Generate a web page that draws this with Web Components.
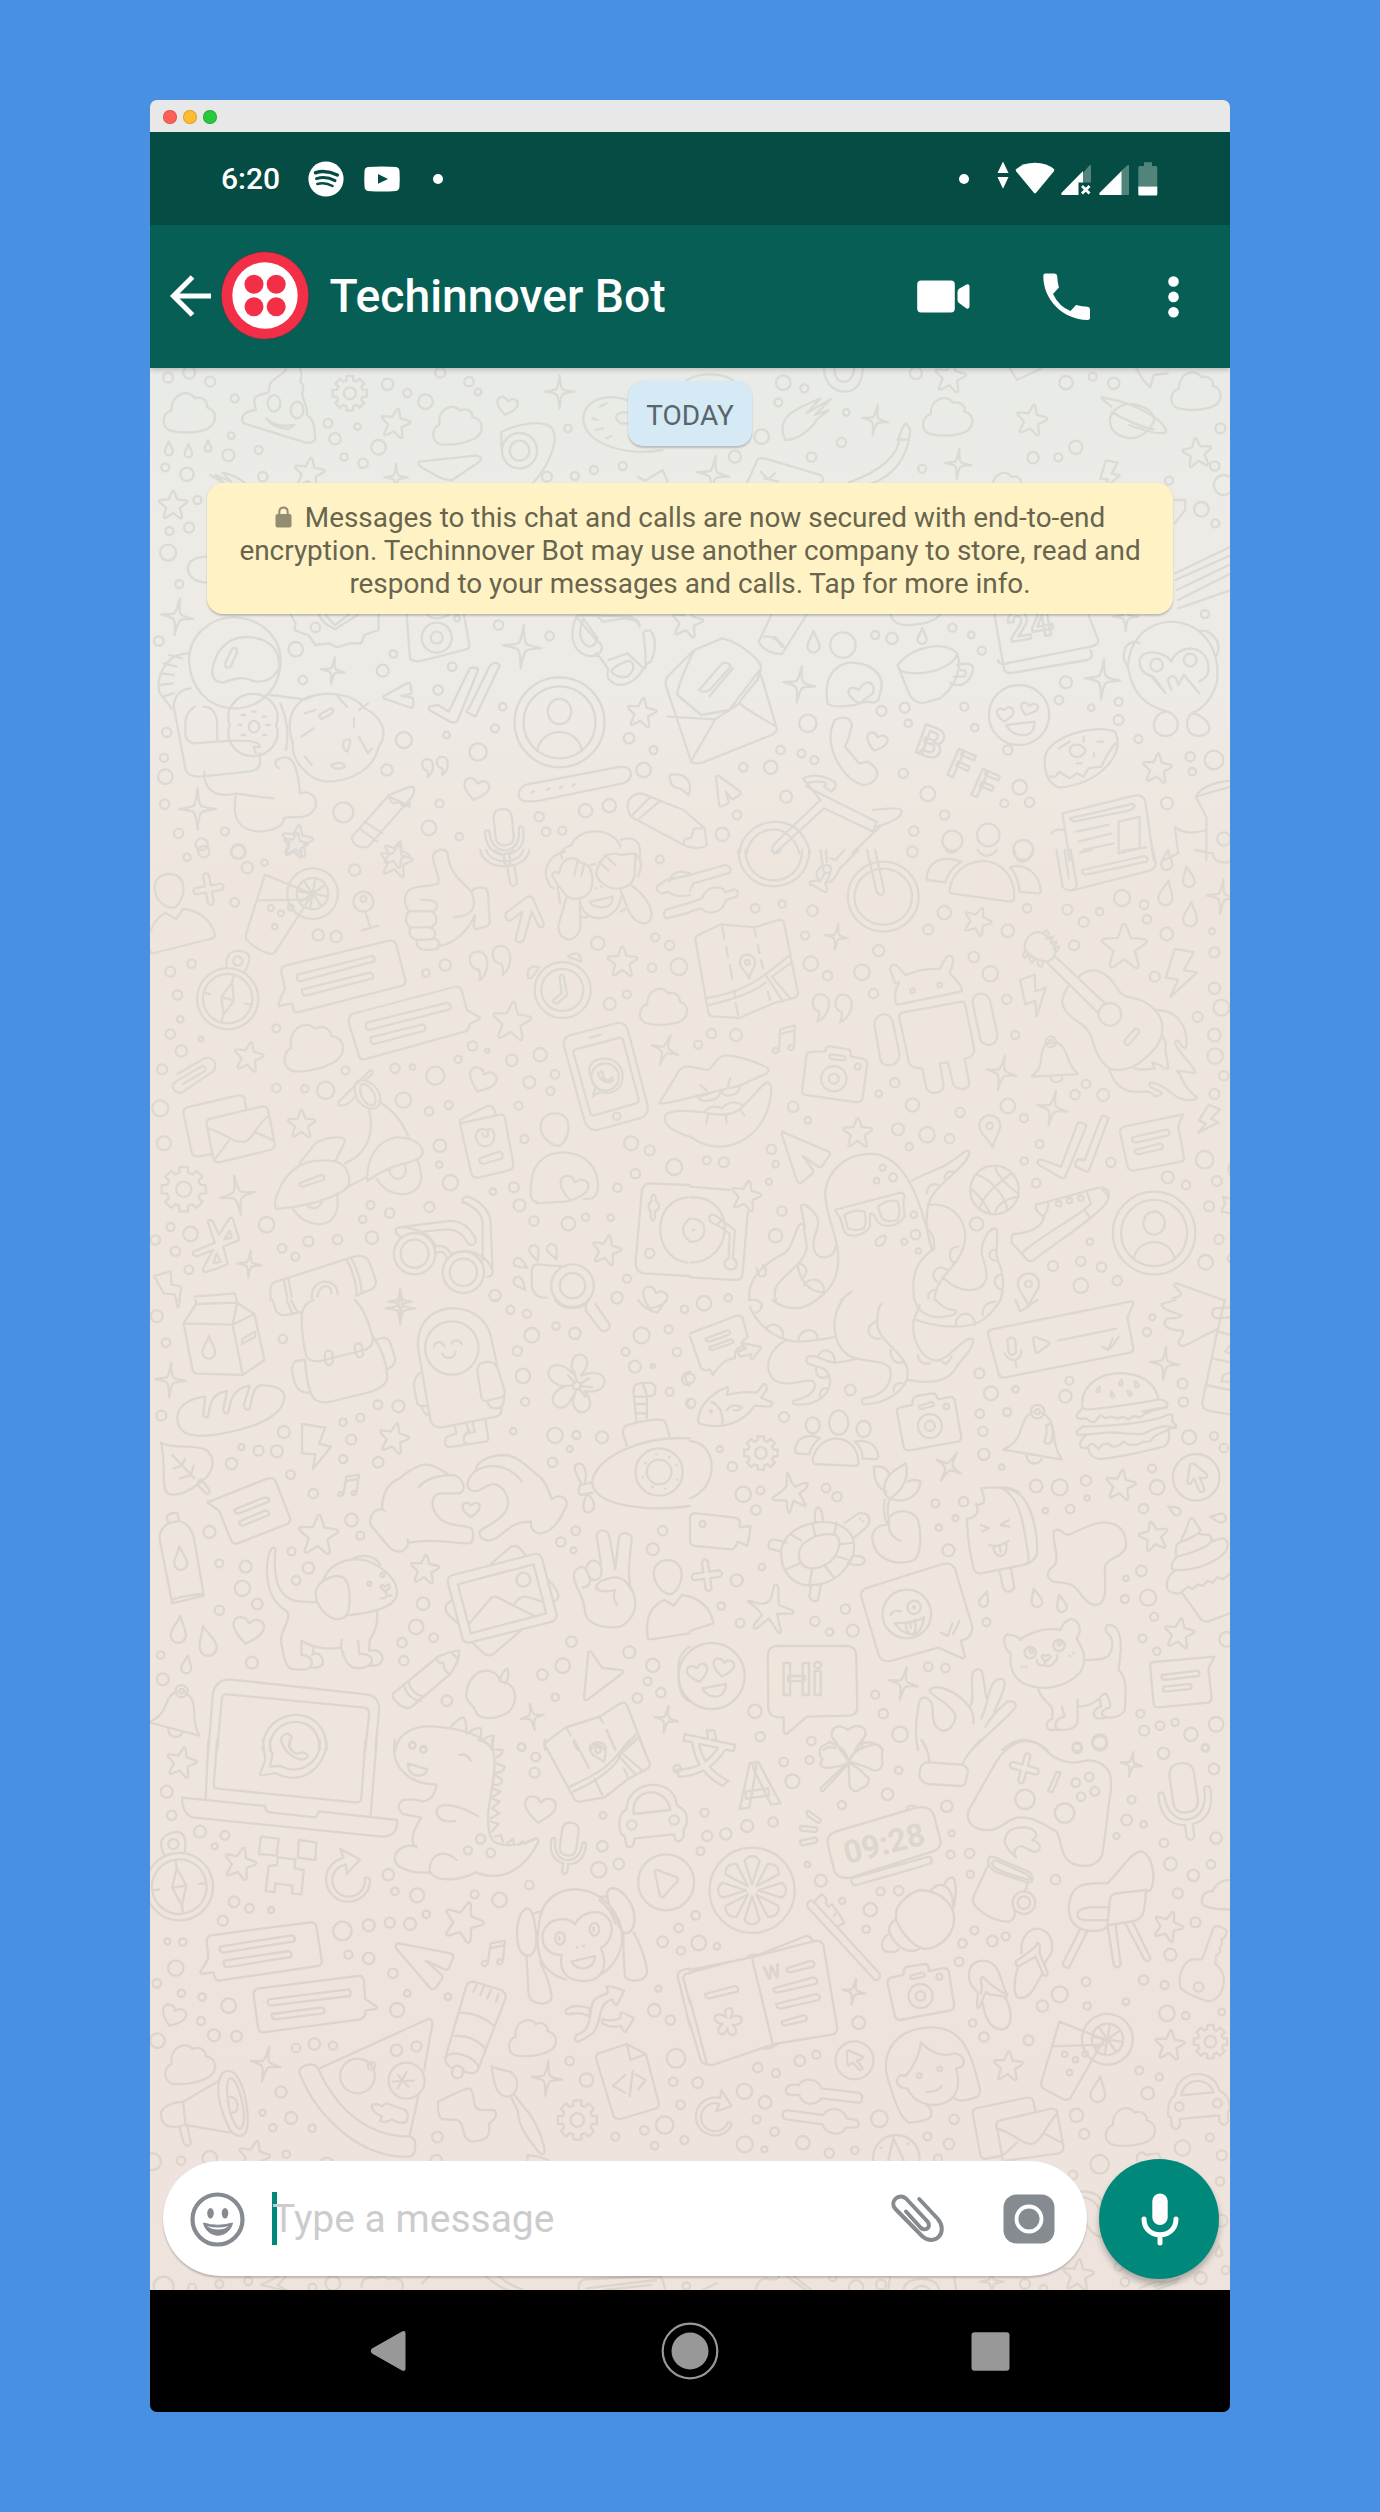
<!DOCTYPE html>
<html lang="en">
<head>
<meta charset="utf-8">
<title>Techinnover Bot</title>
<style>
html,body{margin:0;padding:0}
body{background:#4a90e2;font-family:Roboto,"Liberation Sans",sans-serif;height:2512px;display:flex;justify-content:center;align-items:flex-start}
</style>
</head>
<body>
<phone-window></phone-window>
<script>
const define=(name,html,after)=>customElements.define(name,class extends HTMLElement{
  connectedCallback(){
    if(this.shadowRoot)return;
    const r=this.attachShadow({mode:'open'});
    r.innerHTML=typeof html==='function'?html(this):html;
    if(after)after(r,this);
  }
});

/* ---------- icons ---------- */
const ICONS={
spotify:[36,36,'<circle cx="18" cy="18" r="17.6" fill="#fff"/><g fill="none" stroke="#054d44" stroke-linecap="round"><path d="M7.5 11.7Q18 8.700 29.300 14" stroke-width="3.500"/><path d="M8.500 17.600Q18 14.800 27 19.600" stroke-width="3"/><path d="M9.300 23Q17 20.800 24.600 25" stroke-width="2.500"/></g>'],
youtube:[36,26,'<path d="M4 .9Q18-.1 32 .9Q35.300 1.300 35.500 5Q36 13 35.500 20.500Q35.300 24.300 32 24.900Q18 25.900 4 24.900Q.7 24.300.5 20.500Q0 13 .5 5Q.7 1.300 4 .9Z" fill="#fff"/><path d="M14 8L24 12.900L14 17.800Z" fill="#054d44"/>'],
dot:[10,10,'<circle cx="5" cy="5" r="5" fill="#fff"/>'],
updown:[12,28,'<path d="M.5 12L6 .5L11.500 12ZM.5 16H11.500L6 27.700Z" fill="#fff"/>'],
wifi:[40,32,'<path d="M.6 7.600Q8 .8 20 .8Q32 .8 39.400 7.600L38.900 9.300L20.900 31Q20 31.900 19.100 31L1.100 9.300Z" fill="#fff"/>'],
signalx:[31,31,'<path d="M22 9L28.500 1.300Q30 .3 30 2V18.500H22Z" fill="#51857c"/><path d="M22 7V18.500H17.500V31H.8Q0 30 .4 29Z" fill="#fff"/><path d="M21 22L28.500 29.500M28.500 22L21 29.500" stroke="#fff" stroke-width="2.800"/>'],
signal:[31,31,'<path d="M22 7L28.500 1.300Q30 .3 30 2V30Q30 31 29 31H22Z" fill="#51857c"/><path d="M22.500 7V31H.8Q0 30 .4 29Z" fill="#fff"/>'],
battery:[20,34,'<path d="M6 .3H14V4H18Q19.300 4 19.300 5.500V24.500H.3V5.500Q.3 4 1.500 4H6Z" fill="#51857c"/><path d="M.3 24.500H19.300V32Q19.300 33.500 18 33.500H1.500Q.3 33.500.3 32Z" fill="#fff"/>'],
back:[42,42,'<path d="M22.500 2L3.500 21L22.500 40M4 21H41" stroke="#fff" stroke-width="5" fill="none"/>'],
twilio:[88,89,'<circle cx="44" cy="44.500" r="43.800" fill="#f22f46" stroke="#3d3f49" stroke-width=".7"/><ellipse cx="44" cy="44.500" rx="32.700" ry="33.300" fill="#fff"/><g fill="#f22f46"><circle cx="33" cy="33.300" r="9.500"/><circle cx="55.200" cy="33.300" r="9.500"/><circle cx="33" cy="55.700" r="9.500"/><circle cx="55.200" cy="55.700" r="9.500"/></g>'],
video:[53,33,'<rect x=".2" y=".4" width="37.600" height="32.200" rx="4" fill="#fff"/><path d="M40.500 12Q40.500 10 42 8.700L49.500 4.500Q52.500 3.800 52.500 6.500V26.500Q52.500 29.200 49.500 28.500L42 23Q40.500 22 40.500 20Z" fill="#fff"/>'],
phone:[48,48,'<path d="M2 .5H11.500Q14 .6 14.200 3Q14.400 9 15.900 14.500L10 21Q16 33.500 27.500 38L33 32Q39 33.700 44.500 33.800Q47 34 47 36.500V44.500Q47 47 44.500 47C20 46.500.3 27 .3 3Q.2 .7 2 .5Z" fill="#fff"/>'],
more:[11,42,'<g fill="#fff"><circle cx="5.500" cy="5.500" r="5.300"/><circle cx="5.500" cy="20.900" r="5.300"/><circle cx="5.500" cy="36.200" r="5.300"/></g>'],
lock:[17,22,'<path d="M4.300 9V6Q4.300 1.500 8.500 1.500T12.700 6V9" fill="none" stroke="#928c70" stroke-width="2"/><rect x=".5" y="8" width="16" height="13.500" rx="2" fill="#928c70"/>'],
smile:[55,55,'<g transform="translate(27.500 27.500)"><circle r="25" fill="none" stroke="#868b92" stroke-width="4.200"/><ellipse cx="-7" cy="-6.300" rx="3.300" ry="5.300" fill="#868b92"/><ellipse cx="7.500" cy="-6.300" rx="3.300" ry="5.300" fill="#868b92"/><path d="M-14 3.500Q0 8 15 3.500C13.500 11 7 15.700 .5 15.700S-12.500 11-14 3.500Z" fill="#868b92" stroke="#868b92" stroke-linejoin="round"/><path d="M-10.500 6.500Q.5 9.500 11.300 6.500Q7 10 .5 10T-10.500 6.500Z" fill="#fff"/></g>'],
clip:[54,49,'<path d="M29.200 5L47.500 24.500C59 38 45 53 32.500 42.500L5 14.500C-.5 7.500 8.500-1.500 16 4.500L37.500 27.500C42 33.500 35 38 30.500 33.500L16 17.500" fill="none" stroke="#868b90" stroke-width="4" stroke-linecap="round" stroke-linejoin="round"/>'],
camera:[52,50,'<rect x=".5" y=".5" width="51" height="49" rx="13" fill="#868b92"/><circle cx="26" cy="25" r="12.500" fill="none" stroke="#fff" stroke-width="3.800"/>'],
mic:[38,53,'<rect x="11.300" y=".5" width="15.400" height="31.500" rx="7.700" fill="#fff"/><path d="M3 26C3 47 35 47 35 26M19 42V50" fill="none" stroke="#fff" stroke-width="5" stroke-linecap="round"/>'],
navback:[36,42,'<path d="M2 18.500L32 1.500Q35.500 0 35.500 3.500V38.500Q35.500 42 32 40.500L2 23.500Q-.5 21 2 18.500Z" fill="#989898"/>'],
navhome:[56,56,'<circle cx="28" cy="28" r="27.300" fill="none" stroke="#989898" stroke-width="2.200"/><circle cx="28" cy="28" r="18.500" fill="#989898"/>'],
navapps:[39,39,'<rect x=".5" y=".3" width="38" height="38.400" rx="3" fill="#989898"/>']
};
define('wa-icon',el=>{const i=ICONS[el.getAttribute('name')];
return `<style>:host{display:block;flex:none}svg{display:block;overflow:visible}</style><svg width="${i[0]}" height="${i[1]}" viewBox="0 0 ${i[0]} ${i[1]}">${i[2]}</svg>`});

/* ---------- wallpaper doodles ---------- */
const gearPath=(()=>{let p='';for(let k=0;k<8;k++){const a=k*45;[[-15,38],[-11,50],[11,50],[15,38]].forEach(([d,r],j)=>{const t=(a+d)*Math.PI/180;p+=(k||j?'L':'M')+(r*Math.sin(t)).toFixed(1)+' '+(-r*Math.cos(t)).toFixed(1)})}return p+'ZM17 0A17 17 0 1 1-17 0A17 17 0 1 1 17 0Z'})();
const wedge=(()=>{let p='';for(let k=0;k<8;k++){const a=k*Math.PI/4,f=(r,d)=>(r*Math.sin(a+d)).toFixed(1)+' '+(-r*Math.cos(a+d)).toFixed(1);p+=`M${f(7,0)}L${f(36,-.25)}Q${f(45,0)} ${f(36,.25)}Z`}return p})();
const ring=r=>`M${r} 0A${r} ${r} 0 1 1-${r} 0A${r} ${r} 0 1 1 ${r} 0Z`;
const SYM={
star:'M-4-46Q0-53 4-46L14-19L44-16Q52-13 46-7L23 9L31 40Q30 49 22 44L0 27L-24 44Q-31 47-31 39L-23 9L-46-9Q-51-16-43-17L-14-19Z',
spark:'M0-50Q3-10 10-7Q20-2 44 0Q16 4 10 8Q3 14 0 50Q-3 14-9 8Q-16 3-44 0Q-16-4-9-8Q-4-14 0-50Z',
heart:'M0 45C-22 30-52 5-50-16C-48-42-14-44-3-24Q0-20 3-24C14-44 48-42 50-16C52 5 22 30 0 45Z',
drop:'M0-50C6-28 28 0 28 22A28 28 0 0 1-28 22C-28 0-6-28 0-50Z',
cloud:'M-40 46C-72 40-66-2-42-6C-44-46 0-62 16-36C34-42 50-28 46-14C78-4 72 36 36 44Q0 54-40 46Z',
gear:gearPath,
citrus:ring(50)+wedge,
lime:ring(50)+ring(31)+'M0-29V29M-29 0H29M-20-20L20 20M20-20L-20 20',
bell:'M-8-36Q-20-30-24-8C-28 12-36 20-50 28L46 36C34 20 32 10 28-10Q24-30 8-36M0-38m-11 0a11 11 0 1 0 22 0a11 11 0 1 0-22 0M0-38m-4 0a4 4 0 1 0 8 0a4 4 0 1 0-8 0M-12 32Q-10 48 4 46Q14 44 14 34',
camera:'M-46-26L-22-28L-20-42Q-18-46-12-46L10-46Q16-46 18-42L20-28L46-26Q54-24 54-16V34Q54 42 46 42H-46Q-54 42-54 34V-18Q-54-26-46-26ZM-24 6a24 25 0 1 0 48 0a24 25 0 1 0-48 0M-9 6a9 9 0 1 0 18 0a9 9 0 1 0-18 0M33-14a5 5 0 1 0 10 0a5 5 0 1 0-10 0M-12-36H10V-29H-12Z',
note:'M-16 32Q-36 24-36 40Q-28 52-16 38L-12-30L34-42L32 22Q12 16 14 32Q22 42 32 28M-12-14L33-26',
quote:'M-44-20C-42-42-8-42-6-16C-4 4-14 22-26 28Q-22 16-26 4Q-44 2-44-20ZM8-28C10-50 44-50 46-24C48-4 38 14 26 20Q30 8 26-4Q8-6 8-28Z',
bolt:'M-28-50H12L-2-10H26L-20 50L-10 12L-36 12Z',
mic:'M-16-34Q-16-50 0-50T16-34V-2Q16 14 0 14T-16-2ZM-34-10Q-34-16-30-16T-26-10C-26 34 26 34 26-10Q26-16 30-16T34-10C34 20 20 28 5 30V46Q0 54-5 46V30C-20 28-34 20-34-10Z',
pin:'M0 50C-8 20-32 4-32-18A32 32 0 0 1 32-18C32 4 8 20 0 50ZM-10-18a10 10 0 1 0 20 0a10 10 0 1 0-20 0',
avatar:ring(50)+ring(40)+'M-13-12a13 14 0 1 0 26 0a13 14 0 1 0-26 0M-25 32C-20 4 20 4 25 32',
plus:'M-9-42Q0-56 9-42V-10H40Q54 0 40 10H9V42Q0 56-9 42V10H-40Q-54 0-40-10H-9Z',
flower:'M-6-16C-30-58 30-58 6-16C46-44 62 4 16 6C50 30 8 60 0 18C-8 60-50 30-16 6C-62 4-46-44-6-16Z',
car:'M-50 22C-50-2-42-8-36-12C-30-52 30-52 36-12C48-6 52 4 50 22L46 24V38Q40 50 32 38V28H-32V38Q-40 50-46 38V24ZM-26-10C-20-38 20-38 26-10ZM-38 8a7 7 0 1 0 14 0a7 7 0 1 0-14 0M24 8a7 7 0 1 0 14 0a7 7 0 1 0-14 0',
compass:ring(38)+ring(47)+'M-14-46Q-24-72 0-76T14-46M-7-60a7 7 0 1 0 14 0a7 7 0 1 0-14 0M0-26L10 0L0 26L-10 0ZM-10 0H10M-37 0H-28M28 0H37M0 37V28M0-37V-28',
sliders:'M-48-22H-30C-26-44 4-44 6-22H46Q54-17 46-12H6C2 8-26 8-30-12H-48Q-54-17-48-22ZM-48 18H4C8-4 30-4 34 18H46Q54 23 46 28H34C30 48 8 48 4 28H-48Q-54 23-48 18Z',
plane:'M-50-42Q-48-50-40-46L42-22Q50-18 46-12L30 10Q26 14 22 10L-2-6L18 22Q22 28 16 32L2 46Q-4 50-8 44Z',
refresh:'M-14-36A38 38 0 1 0 38-4Q36-14 28-8A28 28 0 1 1-8-26L-4-10L14-38L-22-50Z'
};
/* Each sheet: origin, horizontal scale, ring marks (x,y,r), stamps (name x y size angle), free strokes */
const SHEETS=[
{o:[140,360],k:1100/1568,
c:'40,53,15 70,38,18 100,65,15 353,73,17 381,99,12 407,125,22 428,38,15 469,65,14 482,96,10 917,68,22 947,85,12 1106,40,18 1320,68,20 1358,50,12 1388,70,17 135,115,12 268,190,13 278,236,17 310,200,10 340,262,22 130,227,10 169,270,12 126,286,18 291,291,11 318,310,14 36,322,12 67,343,20 175,350,14 610,205,11 886,230,22 910,127,12 1007,157,10 1000,247,14 957,291,14 848,290,18 1115,326,12 1273,293,17 1309,292,12 1334,262,20 1540,205,15 688,318,12 647,330,12 620,348,12 580,350,15 1532,318,14 1467,362,12 1545,375,30 82,420,12 42,513,12 70,503,15 40,578,24 56,672,12 1513,448,22 1533,490,12 1518,762,12 27,843,14 222,868,22 250,802,14 361,882,11 511,795,14 584,828,13 346,932,18 232,960,13 445,920,13 425,990,14 517,1040,11 506,1105,12 376,1140,24 437,1125,10 482,1176,26 352,1230,17 38,1117,14 34,1193,12 36,1250,22 1002,855,38 1048,825,12 1072,835,17 1158,803,12 1185,825,10 1200,872,12 1320,967,18 1310,1020,13 1356,1043,10 1395,1080,15 1395,1025,12 1175,1040,12 1090,1043,15 1057,1053,15 1095,1090,11 1190,1103,11 952,1090,26 913,1170,13 943,1180,12 961,1200,12 697,1135,16 718,1230,22 732,1170,12 860,1222,13 899,1222,20 1088,1240,14 1237,1170,14 1254,1282,22 1123,1302,22 1147,1365,14 1232,1330,12 1268,1327,14 1423,1137,12 1497,1190,14 1531,1200,28 1500,1235,11 290,1357,30 35,1333,14 427,1330,12 55,1420,14 121,1414,12 88,1453,18 140,1475,22 412,1404,22 455,1430,11 569,1370,14 579,1415,13 602,1412,12 635,1352,20 669,1337,20 830,1423,20 851,1365,13 921,1310,18 1103,1413,14 1158,1442,30 1209,1425,34 1259,1470,30 1464,1330,18 1545,1437,20 423,833,18 423,833,45',
s:`cloud 69 158 120 0;cloud 450 195 115 -8;cloud 1150 170 115 0;cloud 1504 93 115 0;gear 299 100 105 0;star 364 190 90 10;heart 523 137 62 12;spark 598 95 100 0;spark 1048 180 90 10;star 1271 180 94 10;star 1507 278 90 -8;spark 1166 312 90 5;star 241 338 92 8;spark 365 352 80 0;spark 817 343 110 8;star 47 435 88 0;spark 53 770 110 8;spark 545 860 130 4;spark 275 932 80 8;spark 940 973 110 8;spark 1372 958 120 4;star 715 1058 90 8;star 1450 1225 90 5;star 224 1442 96 8;star 365 1482 80 20;star 780 785 95 10;star 1155 50 95 8;spark 1405 770 85 0;spark 82 1347 125 0;avatar 598 1087 270 0;heart 479 1287 75 14;heart 1050 1145 62 16;quote 420 1228 85 0;drop 41 265 42 0;drop 69 272 40 0;drop 97 258 35 0;drop 1115 828 48 0;drop 960 845 65 0;plane 835 1300 90 20;bolt 1385 350 90 10;mic 520 1432 170 -6;plane 375 1010 90 -45;cloud 1235 385 95 0`,
p:`M208 25C208 45 185 55 185 75C183 100 185 95 178 100C155 110 165 130 165 150C145 155 143 175 148 190L235 247Q245 252 250 238C248 210 250 180 238 165C240 130 228 115 232 90Q235 75 228 65Q232 45 228 25M182 130a8 22 0 1 0 18 0a8 22 0 1 0-18 0M215 150a8 22 0 1 0 18 0a8 22 0 1 0-18 0M180 175Q195 205 220 195L212 207Q190 205 180 175
M516 215C540 190 570 180 585 200C600 230 585 310 560 370M515 215L515 260M516 272a25 53 0 1 0 50 0a25 53 0 1 0-50 0M527 272a14 30 0 1 0 28 0a14 30 0 1 0-28 0M398 305L478 287Q490 290 484 305L445 360Q435 362 425 350L400 320Q395 312 398 305
M700 125C660 90 630 130 632 180C635 250 690 290 745 270M700 160C680 150 672 170 685 190L697 190M655 140L665 130M645 175L652 180M650 210L660 205M665 235L672 228M780 60C800 35 830 40 845 60M975 25C975 70 990 95 1005 95S1030 70 1030 25M990 25Q990 65 1003 65T1018 25M1240 25L1250 60L1285 25M1420 25L1430 60L1440 82L1445 45L1465 40
M920 240C912 210 915 170 935 150C950 130 960 125 970 115L950 160L985 117L962 165L982 150L965 178C955 215 935 240 920 240Z
M1080 240C1085 220 1085 200 1092 190L1098 210C1095 290 1075 350 1040 372M1082 235C1082 280 1060 330 1010 368M1080 240L1096 238
M1383 190C1380 160 1395 130 1415 132C1438 140 1448 165 1445 185C1435 225 1420 240 1405 232C1390 225 1383 205 1383 190ZM1385 140Q1360 100 1378 115C1420 130 1460 180 1463 215Q1455 230 1410 195M1385 155C1400 175 1430 205 1445 208
M865 370L880 300Q883 290 895 298L970 345Q978 360 970 370M885 335L895 358L905 340M890 355L910 365M710 350L720 362L745 330L752 365M100 345L120 370L108 345L130 365L118 338Q140 350 150 370
M1476 640L1555 560M1476 660L1555 585M1478 690L1555 612M1480 745L1555 690M1480 720L1555 640M1475 420L1490 420V450L1475 490
M96 590Q70 590 68 625Q70 665 96 668
M70 905C68 830 100 770 135 772C175 775 205 840 200 920C195 1000 165 1050 130 1045C95 1040 72 980 70 905ZM103 930C108 860 130 825 160 832C190 840 200 880 198 925C190 960 175 970 160 962C145 945 130 960 118 968C106 965 102 950 103 930ZM122 905L132 865Q140 860 138 880L129 920Q120 930 122 905
M70 880C30 880 20 980 30 1005L45 1045M60 895L42 885M52 920L34 910M48 945L29 940M47 970L28 975M48 1000L32 1010M72 985C50 990 45 1030 50 1060L65 1230Q68 1250 85 1250L155 1235C175 1230 172 1200 170 1180M78 1040Q62 1060 65 1110Q62 1140 75 1150L110 1145V1090Q108 1040 90 1040M185 1005L235 1018L250 1005M110 1145Q165 1135 170 1155Q175 1165 162 1160L165 1180
M200 1030Q215 1100 208 1170
M128 1095a35 70 0 1 0 66 0a35 70 0 1 0-66 0M155 1100a7 16 0 1 0 15 0a7 16 0 1 0-15 0M145 1065h5M160 1055h5M175 1070h5M180 1095h5M175 1125h5M145 1125h5M140 1095h5
M195 1200C220 1170 225 1230 228 1300C250 1285 260 1340 240 1365C225 1380 208 1365 205 1375C205 1410 170 1425 150 1405C130 1380 135 1330 137 1300C100 1320 90 1270 92 1235M137 1300Q165 1310 190 1315M195 1200Q190 1215 198 1225
M235 1015C265 990 305 1000 320 1045C345 1070 355 1120 340 1160C335 1220 305 1265 265 1265C240 1260 215 1200 218 1150C210 1100 210 1050 235 1015ZM255 1065L272 1045Q280 1050 270 1065L258 1078ZM282 1010L295 1040M325 1030L312 1050M290 1145Q298 1130 300 1145L296 1175Q288 1170 290 1145M312 1130L325 1180L330 1165M305 1075v25M230 1130L248 1105M235 1190L245 1215M272 1215Q290 1200 292 1220Q280 1235 272 1215M235 1060L250 1050
M380 765L385 895Q388 905 400 903L462 870Q472 865 469 850L462 765M410 765Q420 785 440 765M448 775a4 9 0 1 0 8 0a4 9 0 1 0-8 0M215 765L222 790L220 810Q230 820 240 825L250 855L270 850L280 862L300 850L315 850L320 825L340 810V765M255 765Q260 790 278 808L310 765M265 765Q270 780 278 795L297 765
M412 1040L425 1035L440 1055L470 925Q480 918 482 930L452 1085Q445 1092 438 1080L412 1050ZM465 1055L478 1070L513 915Q505 900 498 920L470 1040Z
M540 1310Q538 1275 560 1270L680 1222Q700 1215 700 1245Q698 1265 688 1270L570 1322Q542 1330 540 1310ZM558 1298l4-5M580 1290l4-5M598 1284l4-5M616 1278l4-5
M622 770L650 840C670 865 650 900 635 885C615 870 612 820 622 770L625 765L700 770Q715 785 712 800M632 775Q620 840 640 860Q650 858 652 835ZM650 880C660 900 665 920 668 930C660 960 680 985 695 970C718 950 715 915 728 905Q740 850 728 812Q715 808 718 830C720 870 722 890 720 925M668 900L695 880L715 920M650 765L660 785L690 775Q712 780 712 800M672 935Q680 955 695 950Q710 920 698 902Q675 915 672 935
M790 870L830 835C860 850 888 910 885 925L840 1050L800 1065L766 1005Q765 980 790 870ZM790 870L752 950Q748 965 750 980L785 1200Q788 1215 802 1208L900 1125Q910 1115 907 1100L885 945M752 1070L820 1078L855 1030Q862 1045 907 1100M820 1078L785 1205M885 930L880 960Q855 1020 855 1030M797 990L830 910Q840 905 842 920L812 990Q800 1000 797 990M812 1008L845 925
M882 845L900 765M882 845Q890 880 915 882L950 765M905 830L918 860M890 830Q905 825 915 860M1070 765Q1075 800 1100 795Q1130 790 1140 765
M980 1030C975 960 985 920 1010 908C1040 905 1060 940 1057 985C1050 1030 1055 1020 1045 1028Q1035 1020 1020 1035Q985 1045 980 1030ZM1025 1030C1000 1000 1010 970 1025 990C1035 950 1050 970 1045 1000Z
M1080 915C1100 860 1145 840 1165 880C1175 950 1150 1000 1140 1015L1115 1030Q1100 1025 1095 995ZM1082 930C1105 955 1160 930 1165 880M1165 915Q1195 900 1185 945Q1175 990 1155 968M1170 930Q1182 930 1175 950L1160 950
M1218 765L1232 930Q1235 942 1245 938L1350 900Q1360 895 1355 870M1223 900Q1225 920 1240 908L1355 860Q1370 850 1365 835L1352 765
M1408 920C1410 850 1430 790 1470 785C1520 790 1540 880 1535 965C1530 1010 1515 1050 1500 1058C1525 1075 1535 1120 1510 1128C1490 1128 1488 1080 1500 1058M1408 920C1395 890 1405 830 1425 850M1535 885C1545 840 1520 800 1510 815M1425 900C1430 860 1465 880 1470 905C1480 850 1520 850 1523 920Q1525 950 1510 965M1440 915a8 17 0 1 0 18 0a8 17 0 1 0-18 0M1488 900a8 17 0 1 0 18 0a8 17 0 1 0-18 0M1425 905Q1425 940 1445 950L1462 1000L1440 945M1470 990L1465 960Q1475 930 1480 975L1488 945L1510 1000M1465 1055C1445 1050 1435 1120 1460 1128C1485 1128 1485 1070 1465 1055M1408 920C1415 1000 1430 1035 1465 1055
M1210 1065a43 90 0 1 0 86 0a43 90 0 1 0-86 0M1232 1085C1215 1060 1222 1035 1232 1050C1240 1030 1250 1050 1242 1070ZM1262 1065C1250 1030 1260 1018 1268 1038C1278 1020 1285 1045 1275 1055ZM1235 1095L1275 1085Q1275 1130 1255 1125Q1240 1120 1235 1095
M990 1080Q1010 1060 1015 1095L1010 1135L1005 1160L1025 1210L1038 1205Q1055 1230 1050 1250Q1045 1275 1030 1275C1005 1260 980 1180 985 1110Z
M1290 1190C1295 1130 1360 1090 1390 1115C1405 1180 1370 1270 1310 1283C1295 1270 1288 1240 1290 1190ZM1325 1175Q1325 1150 1340 1155Q1355 1170 1340 1190Q1330 1195 1325 1175M1295 1250L1305 1250L1310 1235L1325 1255L1335 1240L1345 1250L1352 1225L1370 1220L1380 1180L1390 1150M1310 1165L1325 1145M1345 1130v15M1365 1145h8M1360 1180v10M1335 1210h8
M385 1280Q395 1280 388 1310L325 1460Q305 1470 302 1430L355 1305ZM355 1310L385 1340M320 1385L345 1420M313 1405L338 1445M355 1310Q358 1340 370 1325Q375 1350 385 1330M695 1335Q698 1300 715 1300L775 1350L805 1405L808 1455Q800 1470 780 1460L700 1370Q695 1355 695 1335ZM712 1375L740 1325M702 1365L728 1310M775 1455Q775 1430 785 1435L790 1405L805 1405M755 1245C780 1235 788 1270 782 1305L770 1285Q755 1285 755 1245
M602 1495Q595 1470 615 1455C625 1400 675 1400 685 1460M685 1440Q715 1420 713 1490
M945 1255Q965 1235 990 1265Q995 1280 985 1295L975 1280Q985 1265 965 1265Q950 1265 950 1280L1050 1385L1045 1415L975 1345L905 1480Q895 1470 910 1440L970 1320ZM1045 1350Q1080 1340 1085 1350Q1090 1375 1050 1400M1055 1400L1015 1480M855 1480C855 1380 940 1330 955 1480M865 1480C870 1400 925 1370 940 1480
M1315 1360L1415 1308Q1430 1300 1433 1325L1445 1500M1315 1360L1325 1500M1300 1420Q1302 1405 1318 1410M1325 1375L1415 1332Q1422 1340 1410 1352L1330 1385ZM1335 1415L1380 1395M1338 1445L1385 1420M1345 1470L1388 1450M1395 1385L1425 1370V1465L1395 1480Z
M1505 1310L1555 1280M1505 1310L1520 1370V1500M1505 1310Q1515 1270 1555 1262M1475 1400Q1490 1430 1520 1410M1475 1400L1480 1480L1460 1500`},
{o:[140,850],k:550/1568,
c:'134,22,11 182,5,17 280,5,20 306,53,17 355,38,10 612,60,17 270,157,13 1482,28,12 508,255,17 559,260,17 1305,280,20 1469,262,12 1510,286,14 1536,350,25 1460,353,13 1388,433,12 1339,462,18 147,341,13 86,365,15 107,435,14 115,508,10 86,552,14 118,603,17 174,567,7 63,658,15 58,775,24 68,880,21 389,535,12 389,714,13 470,716,11 586,661,12 529,721,26 727,655,14 777,651,8 842,677,27 815,369,11 870,345,17 907,628,11 948,588,14 990,602,6 1060,631,17 1141,614,20 1183,673,13 1110,697,18 1170,723,12 751,750,23 824,784,13 880,765,12 1079,767,12 1096,867,12 855,887,19 853,944,10 885,998,23 1400,880,21 1453,901,15 1523,951,24 1412,971,14 1361,1013,13 1066,1012,15 1006,1025,10 1082,1066,18 1123,1113,14 1221,1121,20 1270,1101,11 1342,1103,10 1453,1210,14 1388,1286,12 825,1071,15 712,1089,14 657,1065,12 635,1108,11 361,1124,23 144,1152,22 87,1131,12 44,1170,14 101,1204,14 139,1259,13 405,1195,13 443,1220,12 480,1174,15 563,1169,14 661,1163,19 1012,1337,17 1360,1343,17 637,155,30 637,147,9 373,174,9 402,190,9 430,173,9 384,230,8 783,1211,62 783,1211,42 922,1267,62 922,1267,41 1359,799,11 1326,681,41 1233,1307,64 1233,1307,38',
s:`star 443 -15 75 10;star 730 32 98 10;star 1375 335 92 0;star 1060 514 118 5;star 310 620 90 10;star 460 822 85 0;star 1330 1200 90 12;spark 1497 600 95 20;spark 278 1035 120 -10;spark 312 1243 82 5;spark 742 1355 80 0;plus 195 117 98 -10;quote 998 350 135 -5;cloud 1490 470 110 0;cloud 488 590 140 -12;lime 492 131 152 10;compass 250 446 195 15;heart 975 690 82 22;heart 1236 1015 85 15;gear 125 1018 135 0;drop 1126 1210 50 160;drop 1178 1206 50 155;drop 1086 1242 46 120;drop 1084 1302 48 140;heart 1465 1345 75 22`,
p:`M42 115C42 85 60 72 82 72C110 72 124 90 124 120C122 150 105 173 92 173C70 173 44 150 42 115ZM30 245C35 225 50 200 72 188L103 207L123 177C170 180 205 215 214 255C213 262 210 264 200 267L40 309Q30 312 29 300
M356 74L492 132L384 308Q380 314 368 311Q330 300 303 268Q300 260 303 250ZM334 151L480 148M643 187L657 233M632 242L680 226
M835 20C838-2 870-8 877 10C880 60 905 85 945 125C952 120 950 113 965 113C985 112 990 115 992 130L997 215Q997 225 985 230L955 238C945 225 957 210 955 195C935 245 890 285 850 288C855 300 820 302 800 297Q785 285 790 270C770 265 765 250 770 232C755 220 755 200 767 183C750 165 752 130 770 118C795 105 830 112 850 100C858 90 835 40 835 20ZM800 149L830 151C855 155 850 185 828 184L767 183M828 184C852 190 850 230 825 232L770 232M825 232C850 240 845 270 825 268L790 270M825 268C850 262 858 280 850 288M894 202C930 198 955 190 952 150L945 125
M970 0C980 65 1100 65 1110 0M987 0C1000 45 1080 45 1093 0M1010 0Q1040 25 1065 0M1047 50L1055 100Q1065 115 1075 100L1067 47
M1042 190L1102 142Q1112 135 1120 145L1151 218Q1152 235 1137 230L1117 185L1094 270Q1082 285 1070 270L1090 185L1056 212Q1040 212 1042 190
M1212 5C1165 15 1150 60 1160 85Q1165 110 1180 115M1174 75Q1180 60 1195 70C1200 30 1230 10 1260 40C1290 40 1295 90 1285 120C1270 150 1225 155 1210 130Q1190 105 1174 75ZM1300 70C1310 30 1330 0 1370 15L1410 10Q1415 20 1410 55C1415 85 1400 110 1370 115C1335 120 1305 95 1300 70M1247 35L1238 75M1266 45L1258 78M1325 15L1355 45M1308 35L1335 62M1285 45L1300 42M1410 10Q1440 30 1420 80M1215 145L1193 225C1190 280 1250 285 1256 225L1253 145M1370 120L1390 175C1410 230 1460 235 1458 190C1455 155 1425 125 1400 105M1255 160C1270 225 1360 220 1372 140M1282 155Q1320 148 1348 140Q1345 175 1315 172Q1288 170 1282 155ZM1298 115h2M1315 110h2M1258 200L1275 203M1370 185L1383 178M1190 110L1198 160
M403 365Q402 350 415 347L710 272Q726 270 730 282L757 392Q758 402 748 407L450 487Q440 488 437 478L434 460L396 468Q394 465 396 458L413 415ZM448 374L660 318Q672 320 668 334L456 394Q444 392 448 374ZM462 418L655 368Q668 372 664 385L472 437Q460 437 462 418
M596 520Q592 500 605 492L895 411Q912 406 917 420L932 480L968 502Q972 506 966 508L940 522Q938 540 928 544L640 628Q628 630 624 618ZM645 518L878 458Q890 464 884 478L652 540Q640 536 645 518M657 562L806 523Q818 528 812 542L668 582Q656 580 657 562
M1125 420a80 84 0 1 0 160 0a80 84 0 1 0-160 0M1144 420a60 63 0 1 0 120 0a60 63 0 1 0-120 0M1107 385C1100 350 1120 345 1138 353L1115 385ZM1220 320Q1255 295 1258 335ZM1196 380Q1202 370 1208 380L1218 435L1190 460Q1178 462 1178 450L1202 430Z
M1208 585Q1206 562 1225 556L1360 519Q1385 516 1392 545L1448 770Q1448 795 1430 803L1305 840Q1278 842 1268 815ZM1236 610Q1232 602 1242 598L1368 563Q1375 563 1378 572L1422 750Q1422 758 1414 760L1294 796Q1286 798 1284 790ZM1282 563L1314 554
M1290 740L1300 710C1260 650 1290 625 1326 625C1390 630 1390 720 1340 728C1325 730 1310 720 1290 740M1306 670L1318 664L1322 680L1318 685L1335 692L1345 682L1350 690Q1340 700 1325 694Q1308 685 1306 670
M107 672L180 627Q200 617 213 637Q218 655 208 665L120 727Q100 732 93 712L95 702Q98 695 178 648Q190 648 186 662L123 702
M205 912L165 920Q150 920 147 905L124 790Q122 778 134 772L280 736Q295 735 298 745L303 778M190 825Q188 810 200 806L345 770Q362 766 365 780L384 880Q386 895 372 900L225 937Q212 937 209 925ZM192 835C250 850 260 880 300 875C325 865 325 835 365 798M212 930L253 872M330 847L382 872
M655 662L567 755Q562 768 575 767Q595 765 613 740M655 662Q665 658 662 672L642 690M612 710C615 680 650 690 665 705C690 730 690 760 675 772C650 785 610 760 612 710M628 710C640 680 690 745 665 765C645 770 625 740 628 710M652 775C670 850 650 910 585 940M682 755C720 780 750 820 765 860M455 940L500 880C530 860 570 860 580 865Q588 870 580 885L558 930M388 1077Q378 1060 400 1010C440 930 500 925 560 935C600 950 605 1000 585 1020C520 1060 450 1070 388 1077ZM455 1000L515 975Q530 975 523 990L465 1010Q455 1012 455 1000M648 993C645 920 680 870 730 862C790 860 820 900 800 920C780 945 730 930 648 993ZM585 1015L648 980M435 1075C470 1140 580 1150 562 1030M475 1065Q505 1090 520 1052M675 988C720 1060 815 1040 800 965Q798 945 790 930M712 955C710 1000 765 995 757 950Q756 943 752 940
M912 820Q910 812 920 805L990 768Q1003 765 1008 775L1015 795M912 820L1030 793Q1038 795 1040 802L1064 940Q1065 955 1055 960L965 983Q950 985 945 972ZM985 840C965 830 955 850 958 865C965 900 1010 895 1010 860Q1010 835 992 837V858Q980 865 975 850M968 925L1025 905Q1038 910 1032 925L978 942Q965 940 968 925
M1142 835C1142 800 1165 790 1183 790C1215 790 1224 815 1221 840C1218 870 1200 888 1190 888C1170 885 1145 860 1142 835ZM1130 1055C1112 1055 1112 1030 1115 1000C1120 930 1165 905 1210 907C1270 910 1305 950 1306 1010Q1305 1035 1290 1045L1265 1048M1220 1054L1130 1060
M1568 1005L1450 1000Q1432 1002 1430 1030L1413 1235Q1412 1265 1435 1270L1568 1278M1560 1042C1460 1050 1455 1220 1560 1238M1568 1105Q1528 1140 1568 1175M1458 1040Q1464 1030 1470 1040V1052Q1490 1070 1468 1085V1105Q1462 1118 1456 1105V1085Q1442 1070 1458 1052Z
M193 1115Q200 1105 208 1115L225 1155L255 1105Q264 1100 266 1110L283 1170L237 1190L250 1240Q240 1250 185 1267Q178 1262 180 1255L208 1200L165 1218Q148 1220 152 1205L213 1178ZM256 1143L262 1163L240 1168ZM218 1210L230 1235L210 1240Z
M40 1278L87 1264L90 1303L118 1310L112 1350M40 1278L68 1330L98 1333L104 1350M155 1340L270 1330L276 1350M372 1350V1315Q372 1300 390 1294L610 1220Q645 1210 655 1240L672 1290Q675 1310 660 1318L615 1337M410 1290L420 1345M423 1286L433 1340M590 1230Q615 1280 618 1330M603 1226Q630 1280 632 1325M490 1345C485 1280 565 1280 563 1333M506 1340C508 1300 548 1300 545 1330
M730 1150Q725 1132 745 1131L880 1113C930 1110 960 1160 957 1178Q948 1192 935 1180C925 1160 910 1138 875 1138L805 1145M730 1150L742 1160M745 1131C800 1138 830 1155 843 1190Q870 1180 888 1213C940 1185 990 1220 1005 1260Q1007 1280 990 1280M845 1210Q865 1195 875 1225M920 1060Q915 1040 935 1040C975 1055 995 1085 999 1110L1005 1250M920 1055C960 1075 978 1095 977 1125L977 1230
M1215 1250L1130 1243Q1118 1245 1117 1260V1310Q1125 1345 1160 1343
M1568 75L1500 90L1475 108Q1468 128 1490 130L1505 125Q1530 145 1568 135M1510 95Q1515 65 1545 65L1568 70M1568 158L1498 180Q1488 195 1500 205L1568 187`},
{o:[690,850],k:550/1568,
c:'186,175,13 263,162,11 349,182,16 634,5,16 725,188,20 679,239,15 906,242,19 961,175,13 1076,179,15 1122,216,15 1168,185,11 1232,144,24 1295,164,13 1303,208,13 1359,252,19 1488,244,9 1495,307,15 1095,286,15 1325,380,15 1495,415,17 1515,473,24 1447,501,15 1495,555,19 1497,618,23 1522,677,14 1495,732,15 328,256,12 344,341,22 392,377,14 490,367,23 538,302,17 523,431,14 809,321,16 856,371,23 903,448,14 927,555,12 61,551,14 131,555,18 23,584,12 584,698,14 538,731,10 294,770,16 336,811,10 634,765,20 770,787,14 906,768,22 952,804,12 1129,702,13 1098,734,14 1178,735,18 593,838,18 676,854,23 740,866,14 625,890,11 232,898,14 244,943,10 225,995,9 48,931,12 96,937,15 997,882,12 953,933,11 987,999,13 1200,937,14 1467,929,26 1362,982,18 1414,1005,13 1502,993,15 1480,1069,15 1508,1168,14 1470,1237,22 1140,1175,10 1114,1234,14 1173,1251,14 1035,1248,15 1114,1307,22 1218,1292,14 262,1083,14 244,1157,20 817,1122,20 638,1094,10 643,1154,14 611,1175,9 651,1203,8 579,982,12 549,953,9 532,992,8 109,1343,11 868,1020,73 1197,493,34 391,57,12 634,422,7 712,405,7 478,650,9 410,686,38 410,686,15 1051,1061,8 1082,1052,8 1114,1044,8',
s:`spark 1516 140 105 5;spark 418 260 78 8;star 820 213 85 20;star 1238 290 140 0;spark 888 668 105 12;spark 1033 775 105 12;star 478 848 90 0;star 160 1037 92 12;avatar 1323 1149 248 0;pin 165 350 72 -6;pin 857 845 98 -8;pin 965 1320 100 0;quote 400 485 130 10;note 268 566 95 0;bolt 1408 375 145 10;bolt 990 435 120 -20;bolt 1483 815 90 25;bell 1036 630 145 -8;drop 1358 128 76 10;drop 1420 80 62 -10;drop 1427 192 74 4;drop 1360 30 60 5`,
p:`M0 75L100 45Q120 50 115 68L10 100L0 122M0 158L35 145C45 105 95 105 100 127L125 118Q145 122 132 140L103 150C90 200 40 190 33 175L0 185
M138 0C138 145 340 145 340 0M158 0C160 122 318 122 320 0M235 0Q245 20 258 0M372 0L378 45M388 0L390 35M378 45Q350 70 368 90L342 95Q340 110 350 105L385 127Q395 125 390 115L385 98Q410 100 425 58L480 0M400 25L415 30L440 0M385 68L370 95M400 68L390 95
M450 140a101 105 0 1 0 202 0a101 105 0 1 0-202 0M469 140a82 84 0 1 0 164 0a82 84 0 1 0-164 0M505 0L532 125Q545 145 554 125L528 0
M674 85C680 30 720 15 773 35C750 50 735 70 728 97L678 90Q674 90 674 85ZM740 120C750 20 900 -10 924 120V145Q922 155 912 155L745 130Q740 128 740 120ZM912 52C960 35 1000 80 1000 125Q1000 130 990 130L940 125Q935 75 912 52ZM925 0C930 50 965 45 978 0M820 0Q845 35 875 0M730 0Q745 18 762 0
M1045 0L1062 110Q1075 125 1095 120L1310 62Q1328 55 1328 40L1320 0M1068 0L1080 85M1085 0L1103 105Q1095 125 1080 120M1118 60L1295 18Q1308 22 1302 35L1130 74Q1118 74 1118 60M1112 8L1145 0M1232 3L1300 -8M1440 0L1490 10Q1495 45 1540 35
M16 272Q12 262 22 256L88 223L184 232L250 210Q265 207 268 218L308 430Q308 440 298 443L240 459L140 504L65 499Q55 498 52 488ZM92 230L98 265M103 290L108 322M114 345L120 385M125 420L130 440M184 238L188 260M193 285L198 310M202 330L208 355M48 444C140 430 190 400 286 314M50 466C100 455 180 430 216 397M216 375L265 455M286 340L234 380L288 448M130 460L137 495M222 425L228 450
M-88 760L-30 660Q-20 648 0 650L50 660C68 655 75 610 110 617C150 620 210 645 222 655Q228 665 215 672L145 705L0 743Q-80 765-88 760M22 742L85 720Q88 745 60 750Q30 758 22 742M90 720L140 708Q145 735 105 737Q92 735 90 720M0 783L40 787C80 800 130 795 150 770C200 720 205 700 222 697Q235 705 231 730C220 860 100 935 0 860C-50 845-72 825-72 805Q-75 780 0 783M40 787Q60 760 92 775Q115 745 150 765M30 705L48 722M115 685L108 708M52 795L46 820M103 795L104 818M143 778L155 796
M385 604L390 592Q395 588 405 590L450 598Q458 600 458 606V620L492 626Q507 630 505 645L492 745Q488 758 470 756L330 735Q318 732 320 718L332 615Q335 605 350 605ZM400 613L440 618Q448 626 440 632L402 627Q395 620 400 613
M262 845L395 905Q402 910 398 916L375 950Q368 955 363 948L322 918L350 960Q353 967 348 972L318 997Q308 1000 304 990L262 855Z
M585 400L570 358Q575 338 590 347L615 376Q660 353 712 357L730 322Q742 310 750 325Q750 345 740 370Q770 400 776 418Q776 425 768 426L595 463Q588 465 586 458Q580 425 597 397Z
M596 500Q595 490 605 488L775 455Q782 455 784 462L811 600Q810 620 783 627L796 700C795 725 755 720 750 700L735 637L712 640L723 705C722 735 680 735 674 715L662 655Q630 655 625 640ZM526 525C522 490 570 480 578 515L597 610C600 655 545 655 542 625ZM806 460C802 425 850 420 856 455L876 550C880 595 830 595 826 560Z
M955 300C950 270 975 240 1000 248C1030 260 1040 285 1042 310Q1035 330 1015 335C985 330 965 315 955 300ZM1005 250L1015 240L1024 252M1015 265L1035 260L1030 275M1028 280L1045 275L1040 290M1035 295L1052 288L1047 303M955 305Q945 320 955 325L965 312M970 318Q965 335 975 338L985 325M990 330Q990 350 1002 350L1008 335M1020 340L1163 488M1040 318L1183 460M1108 380C1150 340 1190 370 1215 410C1240 455 1250 430 1300 458C1350 490 1360 540 1330 590C1280 650 1240 670 1195 655C1140 610 1160 560 1120 525C1050 480 1050 450 1082 405M1240 570L1270 535Q1282 535 1280 548L1252 583Q1240 588 1238 575Z
M1330 480C1390 480 1420 530 1415 590Q1410 600 1400 585L1392 572Q1380 570 1385 585C1395 610 1430 640 1440 665Q1440 672 1430 668L1388 662C1410 685 1395 700 1445 742Q1445 750 1430 750C1380 755 1370 710 1318 697Q1305 697 1312 710L1345 728Q1345 738 1325 738C1310 720 1300 725 1270 725C1220 725 1200 680 1195 655M1345 555Q1360 575 1355 600L1364 655Q1355 660 1340 645L1318 637L1325 655Q1290 662 1265 655
M990 935Q995 925 1005 930L1058 950L1105 820Q1112 813 1130 825Q1130 830 1070 980Q1065 988 1055 982L995 945ZM1098 940L1105 927L1125 930L1173 800Q1180 793 1193 805L1138 960Q1133 968 1125 962L1100 950Z
M1226 848Q1225 835 1237 830L1405 793L1392 830L1408 920Q1410 932 1400 935L1265 962Q1252 963 1248 952ZM1260 862L1360 838Q1370 845 1365 856L1270 878Q1260 876 1260 862M1268 900L1342 880Q1352 888 1346 897L1278 913Q1268 912 1268 900
M0 1010L115 1020M165 1085L150 1270Q148 1292 130 1290L0 1282M0 1042C135 1035 130 1235 0 1238M0 1106C55 1100 55 1180 0 1175M8 1140h4M55 1105Q55 1090 70 1095L128 1140L122 1225C140 1235 135 1260 115 1258C92 1255 95 1230 110 1225L113 1150L78 1125Q55 1120 55 1105M75 1125Q95 1105 100 1120
M800 1015C830 1040 850 1075 855 1092M820 975C860 990 900 1040 905 1080M868 948Q880 990 935 1030M825 1075C840 1030 870 1010 915 970M870 1093Q875 1050 938 1040
M385 1030C390 960 450 905 525 912C600 920 650 1010 690 1200C640 1240 630 1280 640 1350M385 1030C388 1110 425 1160 423 1230C420 1290 400 1320 360 1350M632 993C680 960 710 970 785 903Q800 900 795 915C780 960 700 1000 680 1060C670 1110 675 1150 690 1200M678 1065C750 1055 785 1110 785 1160C780 1250 700 1270 697 1350M675 1030Q680 995 707 1005M725 985Q730 960 750 965M680 1140Q700 1160 695 1200M765 1190C735 1190 735 1230 752 1238M735 1260C700 1235 680 1280 705 1295M697 1320Q675 1325 680 1345M720 1280C770 1340 850 1330 845 1270C840 1220 825 1220 835 1180C845 1150 860 1130 873 1137C885 1170 860 1200 885 1250Q900 1300 885 1350M875 1200C850 1195 845 1225 870 1232M890 1275C865 1270 860 1310 888 1320
M415 1085Q412 1078 422 1077L600 1028Q612 1028 612 1040L608 1055L612 1100C590 1135 545 1135 532 1110L523 1092L513 1092V1130C495 1160 455 1165 440 1145L428 1103ZM440 1095Q470 1075 498 1085Q505 1120 495 1135Q470 1145 450 1135ZM536 1070Q565 1045 592 1055Q603 1085 592 1110Q555 1120 545 1100Z
M528 1175Q535 1160 555 1157Q563 1165 550 1183Q530 1195 528 1175
M170 1350C160 1290 210 1240 270 1210C295 1190 300 1130 315 1122Q328 1120 325 1140C335 1190 340 1200 310 1240C260 1290 230 1310 245 1350M328 1135L317 1075Q315 1060 330 1065C375 1100 370 1120 355 1160C345 1200 360 1225 385 1222Q412 1220 415 1190M190 1255Q195 1290 215 1275Q220 1255 208 1245M308 1240C340 1245 335 1275 318 1285M325 1305C345 1275 385 1290 382 1325C350 1330 315 1300 308 1250M430 1350L460 1325
M985 1070Q985 1060 995 1062L1155 1016C1190 1005 1205 1030 1185 1060C1160 1100 1040 1180 980 1230Q968 1238 960 1228L918 1180Q914 1160 920 1152C960 1150 1000 1140 1010 1100Q985 1085 985 1070M1022 1055Q1022 1085 1005 1102M950 1205C1010 1150 1130 1085 1143 1060L1130 1022M1175 1018L1190 1035M1125 1080L1140 1102
M1378 1305Q1380 1300 1388 1300L1520 1350M1378 1305L1400 1330Q1402 1338 1375 1345M1520 1040L1535 1045M1520 1040L1525 1060L1515 1085L1540 1090M1540 940Q1530 960 1540 975M1540 1215Q1525 1225 1540 1238`},
{o:[140,1300],k:550/1568,
c:'48,49,18 74,128,13 61,347,15 407,117,13 1056,29,12 1103,41,12 1186,78,11 1117,106,22 1240,100,17 1076,153,14 1092,228,22 1098,305,12 1064,394,10 678,314,13 737,319,18 628,353,12 579,367,11 602,419,15 579,477,12 679,487,16 410,396,18 338,452,15 390,454,18 289,441,9 261,491,17 429,524,13 494,581,14 603,660,19 628,707,12 1183,406,23 1244,405,12 1317,412,18 1225,447,9 1176,487,14 1384,155,12 1430,106,24 1507,88,12 1531,156,13 1411,200,18 1462,198,6 1510,275,12 1242,692,13 1200,726,14 1236,751,9 1490,692,14 1462,748,18 198,696,18 226,790,12 301,800,18 292,865,23 334,912,16 226,931,14 432,754,12 480,804,17 445,841,13 807,911,19 787,981,22 837,1013,13 747,1028,14 752,1082,14 875,1202,16 319,1088,18 59,1065,11 65,1138,18 1230,1025,16 1205,1097,22 1147,1124,16 1184,1192,11 1395,1057,18 1462,1096,20 1447,1144,12 1485,1178,14 1418,1194,14 1088,1342,11 1552,28,11 1245,257,12 889,144,80 1480,516,71 1480,516,37 1093,839,21 654,851,6 691,825,6',
s:`spark 742 25 100 0;spark 86 240 105 3;star 724 415 92 12;star 508 705 122 3;star 812 808 88 5;spark 1118 1250 80 -10;spark 1500 1258 80 10;flower 1240 255 195 12;note 595 555 80 6;heart 944 628 52 0;heart 308 990 92 10;drop 196 142 68 0;drop 115 775 70 -5;drop 111 988 82 6;drop 190 1022 92 -14;drop 133 1093 54 8;bell 108 1235 165 10`,
p:`M160 12L277 8L326 42L264 74L124 70ZM277 8L264 74L293 225L355 180L326 42M124 70L150 210Q153 220 165 221L293 225M291 118L328 95V110L291 132ZM158 0L160 12M275 0L277 8M103 0Q108 45 114 0
M107 360C102 320 140 295 186 290L180 345Q190 360 195 345C200 300 210 280 248 273L237 330Q245 350 252 335C260 290 270 265 313 256L296 315Q302 338 313 325C322 280 325 260 345 256C400 255 420 275 408 310C385 365 300 390 210 405C150 412 110 405 107 360Z
M378 0L387 30Q395 48 415 45L462 35M418 0L435 42M430 0L448 35M495 0Q465 10 461 45C460 100 468 145 475 170Q485 185 510 184L640 150Q668 140 663 110C650 60 635 20 612 0M470 178C475 240 480 270 495 295Q510 310 540 306L660 275Q700 260 705 235C705 180 685 140 662 105M470 180L445 183Q432 190 434 215C440 265 455 280 485 278M672 120Q700 105 712 125L728 175Q728 200 705 207M527 165Q527 152 538 152T549 165L550 185Q545 195 539 195T528 185ZM612 145Q612 130 622 130T633 143L636 165Q630 172 625 172T615 160Z
M792 140C790 60 840 22 900 25C950 28 985 60 998 100L1018 195M792 140L828 360Q835 383 860 382L1015 350Q1032 345 1030 325M962 215C960 190 980 183 1000 186Q1012 190 1020 205L1040 275Q1040 288 1030 292L985 303Q975 303 973 290ZM990 305Q995 325 1015 325Q1040 325 1038 290M802 217Q780 230 781 260L790 308Q792 318 805 318L818 318M802 320Q810 345 826 346M838 140C840 125 860 120 868 140M888 130C895 118 912 118 918 133M861 160C870 180 895 178 900 155M895 375L903 400L880 408Q868 412 870 430Q872 442 885 441L985 425Q995 422 993 412L985 362M930 370L938 395Q922 402 923 420Q925 435 940 432M948 368L955 395L935 400
M1272 10L1270 30L1312 88Q1325 100 1335 88Q1342 80 1337 70L1298 12M1183 0C1200 30 1260 35 1280 0M1345 0Q1355 18 1372 5M1420 0Q1440 30 1475 38L1500 0M1005 0L1020 0
M1238 212L1245 245M1280 235L1255 252M1290 262L1255 258M1270 290L1250 265M1235 300L1243 268M1207 258L1235 257M1220 225L1240 250
M60 428C100 450 160 430 192 452C225 490 200 530 162 555C130 580 100 590 78 580C60 560 75 500 60 428ZM92 465L155 535M128 476L120 497L95 506M153 497L145 525L115 535M165 545L175 538L198 570Q200 582 190 582L162 552
M192 607L365 535Q380 532 386 542L428 655Q430 665 420 672L278 730Q266 733 260 722L226 633ZM270 628L355 592Q370 592 368 605L280 641Q268 640 270 628M284 664L355 632Q370 632 368 645L293 677Q282 677 284 664
M462 372L528 383L510 432L545 440L493 507L500 463L462 460Z
M794 562C815 535 850 525 895 525C925 535 930 575 910 580H860C830 580 825 620 850 650C870 680 930 675 945 685Q955 700 945 728C920 738 850 710 765 728C755 770 720 755 705 735L658 675C650 650 670 625 690 628C690 580 705 550 740 535C800 485 820 480 878 523M690 628L698 632M763 718L765 728M955 515C960 485 990 465 1045 465C1085 470 1120 520 1140 530C1155 545 1170 580 1173 598C1200 575 1230 600 1210 630C1195 665 1170 700 1140 700Q1110 695 1115 665C1060 665 1050 690 1015 715C990 730 965 715 968 695C975 680 1050 660 1050 605C1045 570 1020 545 995 555L965 572C945 578 928 565 935 545C950 490 1040 475 1089 545
M1388 437L1377 400Q1375 380 1390 375C1430 362 1480 355 1495 362C1505 380 1505 395 1510 412M1415 362L1407 280Q1405 250 1425 250L1455 248Q1475 255 1468 280Q1465 290 1445 288V355M1410 290L1440 290M1413 312L1443 312M1418 340L1447 340M1435 255L1445 285M1568 415C1420 405 1290 480 1289 550C1300 620 1450 635 1568 618M1289 547L1255 555Q1245 575 1256 585L1290 578M1258 550C1235 510 1235 495 1250 490C1270 490 1275 520 1268 550M1275 582C1260 610 1260 640 1280 638C1305 630 1295 600 1275 582M1471 463h2M1508 471h2M1529 496h2M1530 539h2M1497 566h2M1460 561h2M1433 532h2M1440 490h2
M76 648Q90 635 107 640L112 663L80 670ZM80 670C60 685 52 700 58 730L92 910L182 887L153 710Q140 670 112 663M90 905Q92 890 180 882
M380 742Q365 750 362 800C360 870 380 910 420 935C435 960 390 1000 405 1040C410 1070 415 1105 435 1107C460 1110 490 1115 490 1085C485 1065 465 1065 460 1065V1022C500 1045 530 1050 573 1043L575 1020M573 1043C585 1085 595 1105 625 1105C655 1100 665 1090 660 1075Q650 1060 625 1062L622 1023M380 742Q390 745 385 760C380 840 395 905 465 905L506 907M490 1065Q505 1055 515 1068Q525 1080 520 1095Q510 1105 490 1103M495 1040L493 1060M676 935C680 970 668 1000 655 1020L653 1052C690 1045 700 1075 683 1092Q675 1098 655 1098M523 840C535 800 580 770 640 780C700 800 740 850 732 885C725 925 650 940 597 945M502 870C515 835 560 820 580 833C600 850 600 900 595 930Q590 960 555 957C520 945 495 900 502 870M605 778C630 760 670 765 685 795M685 862Q690 850 698 860Q712 845 712 862L700 875ZM700 875L705 888M688 895Q700 897 705 885Q710 890 717 885
M878 848Q875 830 892 825L1125 762Q1140 760 1146 775L1188 945Q1188 958 1175 965L940 1028Q925 1030 920 1018ZM906 853L1122 793L1158 940L943 1000ZM938 972L1000 895Q1010 885 1025 895L1120 946M1065 917C1085 875 1105 890 1145 905M996 796L1055 742Q1068 735 1080 742L1102 768M1165 840Q1195 875 1193 890Q1190 900 1180 905M888 900L873 915Q868 930 876 940L910 975M950 1030L982 1062Q995 1070 1008 1062L1085 992
M1302 710C1300 685 1335 685 1338 710L1355 808L1365 715C1370 690 1405 698 1402 720C1395 780 1390 820 1398 860C1420 900 1420 950 1370 980C1300 990 1268 960 1268 930C1265 890 1250 880 1240 845C1225 800 1270 790 1275 815C1285 835 1290 860 1262 862M1274 800C1280 770 1315 780 1316 810C1315 840 1295 850 1280 830M1302 710L1314 790M1300 865C1300 845 1320 840 1350 832C1380 830 1390 850 1400 870M1300 865Q1320 880 1355 870Q1345 890 1360 915
M1465 825C1462 795 1485 780 1505 780C1535 782 1545 805 1544 830C1540 865 1520 883 1510 883C1490 880 1468 855 1465 825ZM1568 1000L1455 1018Q1447 1018 1447 1010C1440 950 1460 915 1495 900L1522 917L1545 885L1568 890
M722 1180L850 1070Q895 1050 910 1052Q912 1060 905 1085L885 1122L775 1220Q760 1230 740 1215L722 1195Q718 1187 722 1180ZM752 1155C760 1185 780 1200 800 1203M765 1145C772 1175 790 1185 808 1190M845 1072Q848 1095 865 1087Q865 1115 882 1122M888 1058L905 1075
M1028 1145C1080 1150 1080 1215 1045 1240C1010 1260 965 1260 958 1235C950 1210 935 1215 930 1190C930 1140 960 1110 990 1112Q1020 1115 1028 1145ZM1028 1140Q1030 1115 1048 1106Q1055 1130 1040 1152
M1278 1055Q1282 1052 1288 1058L1318 1104L1372 1110Q1380 1113 1375 1120L1275 1200Q1266 1203 1266 1192Z
M195 1350L207 1190Q210 1140 255 1138L645 1183Q680 1187 682 1225L671 1350M220 1350L233 1200Q235 1180 250 1183L640 1223Q655 1225 653 1245L642 1350M402 1315Q410 1300 422 1300L432 1310Q430 1325 425 1335L430 1350M350 1350C345 1220 535 1200 532 1350M370 1350C365 1245 515 1230 512 1350
M728 1350C735 1300 780 1275 840 1280C920 1285 990 1310 1003 1350M885 1283Q905 1255 922 1252Q932 1265 930 1300M935 1300Q955 1282 972 1285Q975 1300 970 1315M975 1325Q990 1305 1008 1308L1005 1350M768 1336a9 10 0 1 0 18 0a9 10 0 1 0-18 0M800 1345a9 8 0 0 1 15 0
M1155 1350L1153 1335Q1155 1325 1215 1282L1310 1250L1370 1210Q1382 1205 1388 1215L1438 1350M1215 1282L1228 1305M1235 1325L1248 1350M1310 1250L1320 1268M1330 1290L1355 1350M1375 1350L1418 1298M1285 1350Q1300 1318 1325 1350M1392 1340L1422 1310
M1568 1040Q1530 1060 1535 1125Q1535 1190 1568 1205M1568 215Q1545 220 1545 238T1568 255M1568 298Q1552 310 1568 325`},
{o:[690,1300],k:550/1568,
c:'40,10,22 825,220,15 858,280,21 928,268,10 904,336,12 826,341,13 835,394,14 838,463,17 889,501,8 1082,242,12 1070,289,19 1318,52,9 1303,96,12 1404,251,15 1407,306,14 457,270,16 268,351,15 1423,412,21 1494,408,12 1522,444,13 1317,505,12 1332,562,22 987,558,19 1054,562,24 1129,542,15 1132,594,8 1084,627,13 1013,632,8 780,605,14 700,610,12 757,654,9 709,683,10 737,751,18 85,447,9 121,500,14 152,583,23 201,571,12 188,630,14 388,564,13 419,590,14 205,801,10 133,841,18 89,918,11 143,969,13 443,927,14 356,964,14 398,996,11 464,992,18 1293,626,14 1287,813,16 1243,835,8 1240,897,12 1306,893,24 1323,950,12 1290,1015,12 1331,1054,11 1530,1018,22 845,966,12 679,1100,13 728,1104,13 528,1184,12 551,1241,14 185,1234,20 599,1303,23 346,1323,13 200,1310,14 1284,1241,12 1295,1292,15 1340,1277,13 1383,1267,11 1428,1303,20 1500,1273,22 1168,1325,22 1469,1343,10 1104,1340,13 0,235,14 2,310,14 1443,532,70 684,378,36 684,378,15 731,319,8 618,942,73 639,922,20 639,922,3 62,1128,99 36,672,9 60,334,3 970,1058,17 1052,1036,17 974,1052,6 1054,1030,6',
s:`spark 1353 190 100 5;spark 738 500 95 30;star 1228 555 92 8;star 1322 708 90 -12;star 1395 1000 92 8;spark 608 1150 100 12;gear 202 459 102 0;heart 95 1102 62 10;heart 22 1118 62 -12;bell 985 405 185 5;plus 48 826 98 -8;drop 840 897 48 18;drop 986 893 56 -14;drop 1058 910 52 -14;drop 1165 268 18 18;drop 1203 283 18 -18;drop 1229 248 18 14;drop 1252 279 18 -45;drop 1272 252 20 -30;drop 1380 630 42 -60;drop 1505 653 48 -85`,
p:`M0 100L130 48Q145 45 150 55L165 112Q140 125 150 140Q125 145 128 175Q95 175 65 225Q60 210 55 208Q40 215 32 205L0 110M45 115L105 92Q115 90 115 100Q112 105 55 125Q42 122 45 115M55 142L115 118Q125 118 123 128L65 150Q55 150 55 142M138 155L160 145L150 135Q150 128 160 132L200 140Q205 145 198 150L178 178Q168 178 175 162L145 170Q135 165 138 155
M25 350C30 310 70 275 105 262Q112 260 105 285C140 275 180 275 190 278L210 252Q222 250 218 270L203 293L235 308Q235 318 225 320L185 317C150 370 90 390 30 372Q18 365 25 350ZM62 305C90 320 95 350 92 377M105 330Q120 308 148 322Q140 335 125 330
M170 20C200 90 260 125 310 125Q370 122 415 110M168 0Q200 -5 205 18Q200 35 188 38M220 82C240 60 270 85 265 112M308 122C312 80 365 80 365 120M235 0C270 30 320 35 360 0M435 0C400 50 405 130 450 165C490 190 550 175 570 205C580 250 550 290 495 295Q485 305 495 312C550 315 630 270 620 210C610 150 520 120 535 50Q535 25 545 12M530 65Q505 75 510 100Q520 120 542 115M272 122C220 150 210 210 240 240C280 265 330 235 350 243C370 260 340 295 300 300Q285 310 300 313C370 320 410 270 397 230C390 200 370 205 335 190Q325 175 340 168C370 165 380 185 410 188Q455 185 475 175M365 172C370 140 415 145 413 188M360 200C355 225 370 240 392 230M370 290C370 265 385 260 393 268M572 150C570 180 590 195 610 185M580 275Q580 245 605 250M622 240C700 255 740 240 760 200C780 170 805 150 808 120Q800 110 780 125C750 150 730 180 700 182C660 175 630 120 638 60Q650 30 655 15M640 0C655 50 700 60 750 45Q765 35 755 30C730 30 720 20 700 0M645 60C700 80 760 85 800 75C840 65 860 40 885 0M757 75C760 30 810 30 813 75M835 45Q830 10 870 5M650 165Q650 195 685 190M715 180Q730 205 745 170M928 0L942 35L990 0
M850 105Q848 92 860 88L1255 5Q1265 2 1264 12L1247 52L1264 145Q1264 155 1255 158L900 232Q885 235 880 222ZM978 115Q980 108 988 112L1020 125Q1028 130 1022 135L992 158Q985 160 984 152ZM1050 122L1215 86M905 120Q915 105 927 120L930 155Q918 175 908 155ZM897 160Q905 180 925 180Q945 175 945 150M927 180L931 200M1175 140L1192 150L1205 115M1200 145L1222 110
M1385 0L1345 12Q1340 25 1400 45Q1405 55 1360 55C1345 70 1350 90 1405 92Q1410 100 1392 125Q1395 140 1410 137L1503 87M1525 0L1503 95L1462 300Q1455 325 1480 333L1540 343M1540 22L1495 25Q1480 45 1500 55L1540 52M1508 95L1540 105M1490 175L1540 187M1470 255L1540 270M1540 135L1525 155L1540 160M1540 218L1520 225L1515 245L1540 245
M350 352a20 24 0 1 1-.1 0M424 332a27 36 0 1 1-.1 0M495 363a20 24 0 1 1-.1 0M300 445C305 410 340 400 370 415C350 430 345 445 340 463L305 460Q298 458 300 445M350 475C370 395 470 395 480 480V492Q480 498 472 498L355 492Q350 490 350 475M470 425C510 415 535 440 537 470Q535 478 527 478L492 475Q492 445 470 425
M590 335Q588 325 600 322L633 315L636 298Q638 290 645 288L690 280Q702 280 703 290L708 298L740 291Q752 290 755 302L773 410Q773 422 763 425L625 451Q612 452 609 440ZM653 318L688 306Q698 308 694 318L660 327Q652 325 653 318
M1118 310C1120 250 1175 215 1240 220C1300 225 1330 260 1335 298Q1260 315 1140 328Q1118 330 1118 318M1335 298Q1360 300 1362 315Q1355 325 1335 325L1290 335M1118 325L1102 345Q1100 355 1115 357L1130 355Q1145 370 1155 365L1170 345L1185 355L1200 350L1220 355L1235 350L1250 358L1265 348L1285 352Q1295 335 1360 322M1120 378L1102 395Q1100 405 1112 405L1190 398C1230 395 1250 405 1290 402C1330 385 1345 370 1385 385Q1390 375 1375 365V345Q1365 340 1355 348Q1290 375 1120 380M1130 405Q1108 425 1113 440Q1125 450 1135 440Q1140 430 1150 432L1165 447Q1175 430 1190 430L1205 440Q1225 440 1235 425L1255 435Q1285 435 1290 425L1310 425L1325 408L1380 380M1135 445Q1140 475 1170 477C1240 470 1290 455 1350 440Q1370 430 1365 395
M1020 375Q1025 365 1033 380L1035 400L1030 425Q1020 438 1010 425Q1020 400 1015 375
M1425 495Q1430 488 1438 492L1473 522Q1478 532 1468 535L1453 532L1467 568Q1465 578 1453 575L1437 535L1428 550Q1418 555 1418 545Z
M525 500Q560 495 568 525L565 530C545 560 555 590 570 595C600 610 650 600 658 545Q640 535 620 545M565 530C580 510 600 500 615 490C620 510 625 560 570 595M525 500Q522 560 560 575M555 600Q548 650 565 675M570 598C555 630 570 660 568 690C580 720 600 720 600 723M568 675C530 670 510 700 525 740C540 780 590 800 640 780C660 760 660 700 650 660C635 630 590 625 570 650
M276 520Q282 515 288 545L300 560Q340 540 335 555Q335 565 312 580L330 615Q330 620 320 615L295 602L285 638Q280 640 278 630L275 602L238 600Q228 595 260 575L275 560Z
M165 905Q165 900 195 910Q225 915 232 890L240 855Q252 850 252 870L253 915L290 930Q300 938 290 940L248 942L260 995Q255 1002 250 995L225 955L190 985Q180 988 182 975L205 945Q190 920 165 905
M0 650Q5 638 20 640L128 653Q140 655 142 665L141 682L172 678Q172 700 163 737L136 725Q130 745 120 748L15 738Q0 735 0 725Z
M260 750C270 690 340 660 400 667C460 680 475 720 465 765C440 830 390 860 325 855C270 840 258 790 260 750ZM310 760C315 720 370 695 415 705C435 720 425 760 400 785C360 815 310 815 310 760M350 675L358 710M418 668L410 705M465 728L427 733M452 780L415 768M410 832L385 798M340 858L348 808M270 810L312 790M290 705L318 722M356 670V635Q365 610 375 635L380 665M440 670L480 640C520 635 515 670 500 685L465 715M463 768Q500 765 498 785Q490 798 470 795L450 790M345 858L340 890Q350 910 365 900L373 855M260 755L225 745Q220 720 240 718L275 728M484 656h2M492 664h2
M790 655C790 720 800 770 810 810Q815 820 830 820L950 795C975 790 990 770 990 755C990 700 980 650 960 610C940 570 900 555 830 565Q840 590 838 605Q830 618 815 612Q822 625 818 640Q805 658 790 655ZM885 562C940 590 950 660 965 770Q965 785 960 790M895 562Q925 565 940 580M882 812L893 865Q905 885 925 865L915 805M830 675L852 685L833 695M908 660L885 675L910 680M853 735Q880 745 908 722M866 740Q865 765 885 768Q905 765 902 732M883 740L886 755
M1080 705C1130 680 1160 665 1185 667C1230 672 1245 700 1243 740C1230 780 1180 770 1183 810C1182 850 1190 890 1170 910C1150 925 1130 905 1115 885C1090 840 1060 850 1035 845C1010 830 1020 810 1040 795C1055 770 1030 720 1038 695Q1042 683 1060 695Q1070 705 1080 705Z
M1400 725Q1400 715 1410 700L1425 658Q1430 652 1437 660L1455 690L1450 700C1420 720 1400 725 1400 725ZM1400 725Q1382 730 1385 760L1388 770C1370 790 1370 810 1380 810C1450 815 1540 770 1533 730Q1530 715 1515 715L1485 725Q1490 710 1480 705L1452 702M1388 770C1430 760 1480 740 1485 725M1380 815C1355 830 1350 880 1380 878C1390 885 1400 878 1402 875L1420 860L1432 867L1448 853L1462 858L1475 843L1490 848L1503 832L1520 838L1540 820M1402 878L1455 955Q1460 965 1475 965L1540 940M1540 772Q1550 800 1540 820
M488 890Q485 875 500 865L720 792Q745 787 755 805L805 980Q805 1015 772 1022L784 1070Q780 1078 773 1073L708 1043L575 1082Q545 1088 538 1065ZM572 945C575 930 595 930 602 935M583 970Q640 970 667 952C660 1000 640 1007 630 1003C605 1000 590 980 583 970M615 970Q615 1000 632 1003Q650 995 640 960M627 968L630 985M715 998L735 1008L748 970M750 1003L768 962
M222 1065Q223 1038 250 1038H445Q473 1038 474 1065L477 1225Q475 1247 450 1247L333 1250L278 1300Q268 1303 267 1295V1252H250Q225 1248 223 1225Z
M35 1165L103 1152Q100 1190 70 1190Q45 1188 35 1165M0 890C40 905 60 930 67 970L0 993M0 423C80 430 85 560 0 595
M405 1310C400 1280 425 1270 450 1290C480 1265 510 1285 498 1310Q480 1335 470 1350M405 1310L430 1350M490 1345Q540 1320 550 1350M380 1350Q395 1335 415 1345
M650 1350C640 1310 645 1250 655 1200C665 1185 690 1195 692 1225C690 1270 700 1285 722 1293C750 1290 765 1250 750 1235C730 1200 685 1190 683 1170C700 1150 760 1170 797 1222C815 1200 795 1135 808 1115Q820 1100 833 1115L845 1195M797 1222Q810 1240 808 1270M830 1255C850 1220 850 1150 875 1140Q895 1130 897 1150C895 1180 880 1200 868 1235M842 1280C870 1230 890 1220 905 1205Q930 1200 928 1220C920 1240 880 1270 803 1350M890 1350Q950 1290 1018 1350
M915 1060C895 1050 890 1010 905 1003Q930 1005 945 1020L940 1018C990 985 1030 985 1055 990C1070 955 1090 955 1095 960Q1115 970 1110 1000L1102 1015C1130 1060 1130 1090 1110 1120C1070 1165 1000 1175 950 1150Q905 1120 915 1060M1002 1070Q1005 1062 1014 1068Q1022 1060 1028 1070Q1022 1082 1012 1085ZM1012 1085V1092M988 1080Q990 1100 1010 1095Q1025 1105 1040 1085Q1048 1080 1047 1065M945 1100h3M957 1101h3M1082 1068h2M1092 1060h2M1123 1083C1140 1075 1180 1085 1195 1065C1210 1040 1205 1010 1190 1000Q1180 985 1190 975C1220 970 1230 1010 1228 1050L1222 1110C1250 1140 1240 1180 1240 1230C1225 1255 1195 1255 1180 1250Q1165 1235 1190 1225M993 1168C1005 1210 1040 1210 1033 1245V1257C1010 1265 1015 1290 1030 1290L1043 1290M1060 1220L1068 1250C1040 1255 1035 1280 1050 1290C1110 1290 1105 1270 1105 1245V1200M1105 1220Q1140 1220 1168 1195Q1190 1160 1198 1215Q1200 1225 1185 1225M1168 1195L1172 1220C1150 1225 1145 1245 1160 1255L1180 1255
M1312 1100Q1310 1088 1322 1086L1495 1070L1478 1105L1487 1195Q1487 1206 1478 1208L1335 1222Q1323 1222 1322 1212ZM1345 1125L1448 1112Q1455 1118 1450 1128L1350 1140Q1342 1135 1345 1125M1350 1160L1425 1152Q1433 1158 1427 1167L1352 1175Q1345 1170 1350 1160`},
{o:[140,1740],k:550/1568,
c:'76,155,18 90,226,14 171,275,18 242,286,13 213,319,9 268,485,16 312,505,13 374,510,9 236,542,15 78,604,9 122,606,11 102,684,23 48,730,13 118,760,11 177,771,11 174,843,12 253,797,22 50,902,22 211,886,18 275,889,16 445,924,13 497,912,17 550,917,12 577,573,28 652,556,18 712,548,15 770,552,18 816,523,11 652,655,17 594,644,12 721,700,14 762,760,10 733,810,21 878,770,10 708,404,17 727,454,11 790,466,21 954,463,12 1025,480,22 1110,435,13 971,297,14 935,331,12 1000,339,13 1128,51,13 1125,98,15 1088,21,11 1320,226,10 1318,319,16 1308,389,23 1365,372,16 1531,86,11 1536,564,13 1490,605,16 1542,632,12 1478,746,9 1466,811,19 1512,840,14 1528,955,28 1520,1025,13 1541,1094,13 1496,1155,26 1438,1171,13 1467,1217,11 1355,1190,12 1225,963,13 1273,1020,20 402,1056,17 349,1118,9 431,1134,18 379,1163,11 491,1165,11 417,1243,11 117,1262,13 36,1265,25 199,1255,22 848,1191,16 845,1262,17 1552,1200,12 620,1008,52 660,978,11 731,931,17 788,919,15 760,1022,54 1500,427,84 1402,255,14 1523,240,14 776,16,10 808,28,10',
s:`star 118 67 92 12;star 285 370 98 14;heart 1140 207 92 8;mic 1220 325 155 8;refresh 593 420 175 10;spark 358 972 105 12;star 922 545 122 18;note 1008 638 92 4;spark 1160 1015 105 5;gear 1247 1140 120 0;cloud 1115 893 110 -5;cloud 138 972 118 -8;heart 95 827 72 22;compass 112 440 215 -8;star 325 1250 98 12`,
p:`M195 0L187 178M220 0L210 135Q210 145 220 146L615 187Q630 188 631 175L643 0M675 0L657 230M120 173L358 198Q355 215 370 217L500 232Q508 225 510 214L733 240Q735 290 690 290L150 232Q120 220 120 173M350 0L357 60L342 103Q345 108 385 99C480 150 540 50 530 0M370 0Q370 30 378 42L370 80L400 78C460 110 520 60 512 0M402 0C410 40 460 75 478 50Q480 40 460 37Q440 50 425 18L427 0
M1467 393Q1470 388 1478 391L1530 412Q1536 418 1532 424L1492 470Q1485 474 1482 465Z
M1367 260C1365 225 1375 215 1387 208C1390 115 1525 110 1530 195C1555 210 1565 225 1556 260L1550 265V290Q1540 310 1527 300L1522 283L1410 295L1408 310Q1400 328 1387 318L1382 290Q1368 285 1367 260M1407 222C1400 140 1500 135 1512 210ZM727 0C710 80 770 135 845 133Q840 180 805 184Q780 175 750 180Q725 200 750 222L802 233Q760 300 788 323M788 318C730 310 710 360 740 380C765 395 800 400 827 397C820 350 860 320 903 360M827 397C850 430 920 420 957 397C1040 430 1100 380 1136 305Q1135 290 1120 298C1080 320 1030 320 1010 305C990 290 990 230 995 200C1005 130 1020 60 1003 25Q990 5 965 0M763 70L819 88Q815 108 793 107Q765 105 763 70M910 45Q930 38 943 62M845 215C850 185 900 190 963 228M845 215Q850 250 898 243
M1003 0L1005 25M1012 28L1033 30Q1035 45 1016 52M1016 70L1040 80Q1035 100 1014 98M1012 105L1032 118Q1035 135 1008 135M1005 145L1028 155L1007 170M1003 175L1025 185L1003 205M1003 205L1025 220L1000 235M1000 245L1022 252L1003 275M1012 290L1028 285L1035 305M1045 312L1063 297L1068 315M1080 315L1090 303L1098 312M1103 308L1115 303L1122 300
M1152 10L1240 180Q1245 186 1255 185L1325 172L1390 118L1448 85Q1455 80 1453 70L1425 0M1155 0L1152 10M1225 140C1310 100 1340 80 1395 0M1235 155C1300 125 1350 85 1365 55M1365 48L1410 100M1365 48L1415 0M1380 45L1430 90M1238 0L1280 85M1295 115L1318 165M1380 85L1390 110M1345 5L1355 28M1282 28C1280 0 1330 0 1328 28Q1328 50 1323 65C1300 50 1285 45 1282 28M1298 30a8 9 0 1 0 16 0a8 9 0 1 0-16 0
M344 290L395 296L390 347L339 342ZM453 300L503 307L500 360L450 353ZM393 352L443 358L440 385L467 390L460 463L433 460L435 437L386 430L383 457L358 453L367 378L390 375Z
M190 605Q190 590 203 586L485 547Q500 546 503 560L518 660Q520 675 507 678L225 722Q215 722 213 712L209 697L175 702Q170 698 174 692L195 655ZM228 620L432 586Q445 590 440 604L236 638Q225 634 228 620M240 662L425 633Q436 638 430 651L247 682Q236 678 240 662
M324 765Q322 750 338 745L620 708Q635 706 638 720L642 777L672 798Q680 803 672 807L643 812Q645 830 628 838L350 877Q340 878 337 865ZM366 778L595 748Q604 755 598 768L372 797Q360 792 366 778M376 822L520 802Q530 808 524 820L385 838Q374 836 376 822
M728 618Q728 610 738 610L885 640Q895 645 893 652L880 685Q875 692 868 688L815 662L860 705Q864 710 862 715L842 745Q835 750 828 745L732 628Z
M455 1000C450 980 485 965 505 980C560 1110 650 1190 770 1190Q785 1195 785 1215Q785 1250 765 1250C620 1255 500 1120 455 1000ZM512 985L815 840Q832 832 834 850L810 990M793 1070L768 1190M660 1098Q670 1085 690 1100Q700 1085 715 1095L757 1110Q770 1130 757 1148Q735 1150 720 1138Q700 1150 685 1143L690 1130Q660 1115 660 1098M720 1025L780 1022M760 995L735 1045M735 1005L765 1040
M930 740Q935 722 955 726L1030 750Q1045 760 1042 775L965 985Q960 1000 945 1000L925 995M930 740L870 955Q870 975 890 985M960 735L950 755M980 740L970 765M1000 750L990 775M1022 762L1015 785M915 818Q970 820 1010 858M897 888Q950 885 983 925M875 950C890 930 950 945 965 980M893 985Q895 975 908 978L922 985L918 1008Q910 1018 895 1012Q885 1005 893 985
M1137 560C1140 480 1190 445 1250 448C1320 455 1375 520 1375 600C1370 650 1340 690 1310 705M1137 560Q1125 640 1155 680Q1180 710 1215 718M1240 553C1260 505 1340 500 1345 565C1345 600 1325 620 1313 622C1335 670 1325 725 1262 723C1205 720 1195 680 1203 645C1160 645 1140 610 1150 575C1165 530 1220 530 1240 553ZM1184 595a13 18 0 1 0 27 0a13 18 0 1 0-27 0M1282 568a13 18 0 1 0 27 0a13 18 0 1 0-27 0M1195 590v10M1293 563v10M1245 622h3M1263 618h3M1230 665L1297 648Q1295 682 1265 685Q1240 685 1230 665M1105 505C1080 510 1070 560 1077 610Q1085 650 1110 647Q1130 640 1130 590C1125 540 1120 510 1105 505M1102 650L1108 760C1110 800 1180 800 1173 765C1165 710 1150 690 1140 665M1122 520L1145 514M1332 455Q1340 440 1360 447C1390 465 1410 500 1410 540Q1405 580 1385 580Q1365 570 1360 540C1345 510 1330 490 1332 455M1310 472L1330 468M1310 480Q1345 510 1355 550M1408 578C1425 610 1440 650 1446 695C1445 725 1395 730 1383 710C1378 660 1378 620 1378 580
M1240 895Q1240 885 1255 880C1300 860 1270 780 1310 770L1335 758L1330 740Q1335 735 1380 752L1360 795Q1350 795 1347 778C1300 790 1320 850 1290 880Q1270 895 1250 905Q1240 905 1240 895M1283 805Q1240 790 1215 808Q1210 825 1225 822Q1260 815 1280 830ZM1318 838Q1350 845 1370 835V818Q1375 815 1408 835L1385 875Q1378 878 1372 858Q1340 865 1318 850Z
M1300 955Q1298 945 1308 940L1388 912L1442 942L1479 1090Q1480 1102 1470 1106L1370 1137Q1355 1138 1350 1128ZM1388 912L1398 960L1442 942M1383 1005L1348 1038L1383 1058M1405 992L1396 1068M1412 1003L1442 1020L1420 1048
M850 1085Q925 1045 940 1045C960 1060 940 1100 970 1110L1010 1110Q1025 1130 995 1150C1000 1190 990 1200 950 1205C910 1200 930 1150 905 1140L860 1137C845 1120 850 1100 850 1085Z
M1002 978Q1010 985 1055 995C1085 1015 1080 1060 1050 1070C1010 1070 1010 1020 1002 978ZM1057 1068L1078 1115Q1075 1160 1140 1240Q1155 1250 1153 1225C1140 1170 1120 1130 1097 1105L1068 1065
M123 1085L225 1022M123 1085L130 1155L258 1178M123 1085C80 1090 55 1105 60 1130C65 1165 90 1165 130 1155M223 1045C225 990 250 985 270 1000C305 1040 315 1150 300 1180C280 1200 260 1180 250 1155C230 1110 222 1080 223 1045M248 1045C250 990 275 1015 290 1080C305 1150 290 1180 275 1160C255 1130 248 1080 248 1045M253 1070Q275 1070 278 1095T260 1118M112 1160L125 1210Q135 1225 145 1210L135 1160
M1568 685Q1530 690 1533 710L1568 860M1568 700Q1548 700 1549 715L1568 790M1105 1245L1135 1250L1165 1260M1105 1245V1262M515 1262Q532 1245 550 1262`},
{o:[690,1740],k:550/1568,
c:'267,66,13 341,60,12 292,124,21 41,218,12 163,258,18 237,246,14 49,288,15 102,282,17 30,333,12 335,373,8 373,422,18 433,195,12 595,91,11 563,163,17 732,199,17 746,280,9 743,344,12 797,340,14 799,403,11 543,454,12 595,452,14 434,483,9 514,509,20 502,568,11 811,571,12 777,610,13 862,603,16 900,589,12 767,665,13 1054,763,24 1005,798,17 1129,725,13 1132,798,11 1243,785,10 1293,720,14 1353,735,12 1370,644,18 1391,460,15 1441,547,15 1435,406,17 1485,373,13 1370,372,19 1351,309,13 1500,294,17 1293,253,10 1216,288,9 1245,240,16 1259,179,12 1494,87,16 1350,40,17 1469,24,11 1104,25,14 1168,10,22 1042,419,14 1360,820,23 1413,827,11 1516,816,10 806,849,11 838,891,14 965,901,15 1281,991,12 1338,1011,11 1305,1060,19 1102,1126,20 1124,1182,15 1168,1273,28 1404,1224,23 1516,1246,15 1482,1192,12 16,526,13 25,609,22 77,619,10 481,848,19 193,983,14 245,999,12 313,962,16 360,944,12 22,1028,16 155,1054,23 214,1087,19 190,1138,12 241,1175,13 156,1213,24 212,1228,9 322,1208,20 397,1239,14 470,1231,11 540,1136,25 753,1138,14 677,1189,12 738,1212,16 707,1255,12 955,178,29 1068,219,29 1100,128,13 1138,111,13 1154,154,13 1115,170,13 952,488,19 952,488,34 657,768,36 657,768,14 711,710,9 1450,741,14 469,961,57 588,1255,70 654,1007,7 712,987,7 1068,943,8 1127,942,8 1099,959,8 1082,998,8',
s:`citrus 177 451 256 0;spark 1258 73 75 10;mic 1413 185 232 -8;spark 467 755 78 10;star 1363 558 90 20;star 1368 915 90 5;gear 1484 905 102 0;star 907 978 90 3;lime 1190 898 152 10;drop 1165 1048 78 8;cloud 1252 1160 115 -3;refresh 70 1130 150 38;flower 108 848 92 5;plus 953 85 95 15;car 1448 1080 185 -5`,
p:`M452 65C440 10 410 20 398 5L390 12C360 20 370 50 378 58C365 75 375 85 400 83C430 80 445 75 452 65C460 30 500 30 490 10C520 0 550 20 548 35C545 50 550 60 548 75C540 95 525 95 510 85C490 75 470 70 452 65L455 140Q470 165 488 145C515 135 515 110 500 108C490 85 465 80 452 65L372 145Q372 155 380 153L448 75M410 0L452 65L492 0
M332 215Q338 210 345 218L372 238Q375 248 365 248L335 228ZM315 258L358 262Q368 270 358 276L318 272Q310 265 315 258M315 302L358 292Q366 298 360 307L320 316Q310 310 315 302
M392 310Q390 285 415 275L645 203Q685 195 695 225L714 300Q718 325 690 335L460 412Q425 420 412 395ZM618 208Q618 198 630 197Q642 195 644 203M460 425Q458 415 470 412L680 350Q692 350 688 368Q685 373 475 435Q462 437 460 425
M795 210L870 70C900 20 940 -10 990 10C1030 40 1030 60 1090 68C1120 70 1130 50 1170 70C1200 90 1202 110 1200 150C1190 210 1185 290 1175 345C1160 380 1125 385 1090 370C1055 355 1060 300 1045 275C990 240 960 225 925 235C890 250 880 275 840 270C800 265 785 240 795 210ZM1045 95L1057 98L1033 157L1021 153Z
M660 0Q680 30 682 62M828 0Q790 40 777 72M683 67L775 74Q793 80 792 95L785 130Q780 138 770 138L680 132C650 125 650 100 660 78Q668 65 683 67
M930 352Q900 325 897 305C900 265 930 260 960 263C990 270 995 290 975 300Q1005 310 995 330C980 345 965 325 945 318Q915 325 930 352ZM850 360Q850 345 870 352L965 395Q980 405 975 425Q965 430 940 420L870 395Q848 380 850 360M860 370Q865 355 880 365L955 400Q970 410 970 418Q950 420 870 385ZM850 375L808 470Q803 490 820 505C850 535 885 545 910 545Q930 535 925 510M963 428L955 455
M587 530C580 490 640 450 660 450C720 455 760 500 752 550C745 590 710 625 670 627C630 620 590 560 587 530ZM683 455Q710 420 735 445Q755 470 748 510M725 432Q740 405 752 415C765 450 755 480 752 500M585 538Q560 560 570 580C590 630 630 640 652 628M570 580C540 595 540 640 570 635Q590 638 595 628
M335 490Q340 480 350 482L540 700Q545 710 538 718Q530 723 525 718L338 505Q332 497 335 490M357 482L375 463Q382 465 390 480L387 490L395 500L405 493L430 530L440 548L420 560M415 520L410 528
M1125 570C1090 560 1078 530 1080 500C1085 440 1110 425 1190 430C1230 390 1260 330 1290 335C1320 350 1325 410 1318 435C1310 470 1300 440 1300 455C1295 500 1300 535 1265 543L1195 555C1180 575 1150 575 1125 570ZM1105 520C1110 505 1130 500 1195 502M1105 525C1105 545 1130 540 1190 540M1190 548C1200 480 1190 465 1215 460L1300 450M1112 568L1063 670Q1065 685 1080 683L1133 573M1190 555L1208 675Q1218 690 1228 675L1213 552M1240 548L1295 658Q1308 670 1313 655L1262 545
M1460 490C1455 460 1480 450 1490 455C1500 420 1540 415 1545 425M1460 490Q1470 508 1540 508M1460 658L1493 562Q1505 552 1530 572Q1530 590 1515 598Q1520 610 1510 625Q1515 640 1500 645L1498 672C1520 690 1530 720 1515 755C1500 785 1480 785 1470 782C1440 770 1420 765 1400 745C1390 720 1400 670 1430 658Z
M795 700C800 660 840 650 870 678C890 705 890 745 905 762Q905 772 897 770L870 765Q850 765 845 755C830 775 835 790 822 805Q815 800 822 760Q792 730 795 700ZM833 785C840 820 850 870 890 868C920 865 915 820 910 800Q905 780 895 770M905 765Q865 745 835 710Q825 715 832 735L830 760M945 640C940 590 970 560 1000 567C1035 580 1035 620 1030 640L1010 670L1020 700Q1015 712 1008 705L985 650Q960 665 935 680Q925 672 930 662Q945 655 985 620Q990 600 997 615V640L1020 700M935 680C925 710 920 760 935 773C965 780 980 750 1005 700
M563 730Q562 715 575 712L608 705L610 690Q612 682 620 680L670 672Q678 672 680 682V693L720 685Q735 683 738 695L753 795Q753 808 742 811L600 840Q588 840 584 828ZM628 708L662 697Q672 700 667 710L637 717Q625 718 628 708
M0 690L175 652L355 603Q375 600 380 615L420 865Q420 878 408 883L240 912L70 973Q40 980 30 960L0 850M0 780L48 970M178 660L236 912M0 698Q150 655 160 655L195 645L330 588Q345 588 348 600M160 655Q170 640 195 645M205 925Q230 930 250 912M43 762L128 738Q142 742 135 755L55 775Q43 775 43 762M275 685L345 662Q360 668 352 680L285 697Q275 695 275 685M238 745L352 712Q368 718 360 732L250 757Q237 757 238 745M246 792L360 762Q375 768 368 780L258 806Q246 805 246 792M262 845L325 825Q338 830 330 843L270 856Q260 856 262 845
M448 935Q452 928 460 935L493 950Q495 958 475 962L493 985Q487 997 480 985L463 968L452 977Q447 975 448 935
M273 1050Q275 1030 310 1035C325 1010 365 1015 375 1045L480 1058Q495 1065 490 1080Q488 1090 480 1088L375 1075C355 1100 320 1095 312 1065H290Q272 1065 273 1050M265 1118Q270 1108 285 1112L380 1125C395 1100 435 1100 447 1135L475 1140Q485 1150 478 1162L445 1163C430 1190 385 1185 378 1153L275 1138Q260 1135 265 1118
M755 1075C765 1085 780 1085 820 1070Q830 1060 825 1040C800 940 780 860 685 862C590 865 550 930 560 1000C575 1060 600 1140 625 1148C660 1145 690 1140 688 1120Q688 1105 675 1095M658 908C680 930 710 955 755 940C780 945 785 965 778 975Q770 985 758 985C775 1040 760 1095 690 1095C650 1090 630 1070 620 1045Q590 1045 590 1020Q595 1000 615 1008C645 970 655 940 658 908M675 1055Q705 1058 718 1037
M1053 845L1180 898L1085 1073Q1080 1082 1065 1078L1010 1048Q998 1040 1002 1025ZM1032 919L1180 914
M885 1248L840 1257Q830 1255 828 1245L806 1120Q805 1110 815 1105L960 1073Q975 1072 978 1080L985 1113M873 1160Q870 1145 885 1141L1030 1106Q1042 1105 1046 1115L1065 1220Q1065 1235 1052 1240L900 1262M873 1165C930 1180 935 1210 975 1212C1005 1200 1010 1165 1043 1125M888 1250L932 1208M1013 1182L1062 1210M892 1262L875 1160
M565 1262L580 1195L610 1262M620 1212h3M543 1223h3M1275 1262L1275 1245Q1290 1230 1300 1245L1335 1240L1345 1262`},
{o:[140,2140],k:560/1568,
c:'66,440,30 146,443,12 222,432,12 303,423,12 483,443,12 540,430,22 1530,438,11',
s:'',
p:`M390 408L338 435L400 450M408 410L385 435L410 450M621 440C618 410 650 410 660 415Q680 402 695 418C725 410 740 420 735 445M966 405Q1000 440 1030 450M1000 405Q1040 440 1070 448M1228 450Q1228 420 1245 418L1450 408Q1465 408 1470 450M1250 445L1445 420M1300 450L1430 435M790 430L810 408`},
{o:[690,2140],k:560/1568,
c:'1072,105,13 1484,124,13 1488,242,18 1500,390,12 1430,414,18 1218,426,13 1200,380,12 938,432,15 990,446,11 535,434,15 465,443,22 400,412,11',
s:'star 1087 405 95 5;spark 845 425 80 0;drop 1481 332 35 0',
p:`M1085 155Q1145 150 1155 190M1095 170Q1135 175 1150 215M1105 240Q1125 290 1155 290M560 410L555 450M740 410L745 450M598 450C600 405 695 405 697 450M625 450Q650 425 672 450M185 450Q190 415 215 415Q240 425 250 410M270 408L325 450M290 408L340 450M35 450L75 430M1300 440L1370 415M1305 450L1365 425M1260 445Q1290 425 1330 425`}
];
/* Lettering inside the doodles: text, x, y, size, angle, solid */
const LETTERS=[['B',931,742,42,20],['F',961,765,40,24],['F',985,785,40,24],['24',1030,624,40,-10],['Hi',802,1679,44,0],['文',706,1757,56,12],['A',757,1784,62,-8],['W',772,1972,20,-12,1],['09:28',884,1843,32,-14,1]];
const inkAt=y=>{const t=Math.max(0,Math.min(1,(y-368)/1922)),s=[[0,219,218,213],[.35,220,217,211],[.6,220,214,205],[1,220,213,202]];
  let i=0;while(i<2&&t>s[i+1][0])i++;const a=s[i],b=s[i+1],f=(t-a[0])/(b[0]-a[0]);return 'rgb('+[1,2,3].map(n=>Math.round(a[n]+(b[n]-a[n])*f))+')'};
function drawWallpaper(){
  let out='';
  for(const s of SHEETS){
    const [ox,oy]=s.o,k=s.k,map=(x,y)=>[(ox+x*k).toFixed(1),(oy+y/3).toFixed(1)];
    for(const t of s.c.split(' ')){const [x,y,r]=t.split(',').map(Number),[a,b]=map(x,y);out+=`<circle stroke="${inkAt(+b)}" cx="${a}" cy="${b}" r="${(r/3).toFixed(1)}"/>`}
    for(const t of s.s.split(';')){if(!t)continue;const [n,x,y,z,w]=t.trim().split(' '),[a,b]=map(+x,+y);out+=`<path stroke="${inkAt(+b)}" d="${SYM[n]}" transform="translate(${a} ${b}) rotate(${w||0}) scale(${(z/300).toFixed(3)})"/>`}
    for(const line of s.p.split('\n')){const m=line.match(/^M\s*-?[\d.]+[ ]?(-?[\d.]+)/);out+=`<path stroke="${inkAt(oy+(m?+m[1]:600)/3)}" transform="translate(${ox} ${oy}) scale(${k} .33333)" d="${line}"/>`}
  }
  for(const [t,x,y,z,w,f] of LETTERS){const c=inkAt(y);out+=`<text transform="translate(${x} ${y}) rotate(${w})" font-size="${z}" y="${(z*.36).toFixed(1)}" ${f?`fill="${c}" stroke="none"`:`stroke="${c}"`}>${t}</text>`}
  return out;
}
define('chat-wallpaper',()=>`<style>
:host{display:block;overflow:hidden;background:linear-gradient(#e8ebe7 0,#ebebe7 110px,#eeebe6 240px,#eeeae6 320px,#eee6dd 500px,#eee6dd 1300px,#eee4dc 1620px,#eee3dd 1922px)}
svg{display:block}path,circle{vector-effect:non-scaling-stroke}
text{font-family:Roboto,"Noto Sans CJK SC",sans-serif;font-weight:700;text-anchor:middle}</style>
<svg width="1080" height="1922" viewBox="150 368 1080 1922"><g fill="none" stroke-width="2.300" stroke-linejoin="round" stroke-linecap="round">${drawWallpaper()}</g></svg>`);

/* ---------- interface ---------- */
define('window-bar',`<style>:host{display:flex;align-items:center;gap:6.600px;height:32px;box-sizing:border-box;padding:2px 0 0 13.300px;background:#e8e8e8}
i{width:13.400px;height:13.400px;border-radius:50%;box-sizing:border-box;border:1px solid #0002}</style><i style="background:#ff5f57"></i><i style="background:#febc2e"></i><i style="background:#28c840"></i>`);

define('status-bar',`<style>:host{display:flex;justify-content:space-between;align-items:center;height:93px;box-sizing:border-box;background:#054d44;padding:0 72px 0 71px;color:#fff;font-size:30px;font-weight:500;line-height:36px}
div{display:flex;align-items:center}span{width:87px;margin-top:1px}</style>
<div><span>6:20</span><wa-icon name="spotify"></wa-icon><wa-icon name="youtube" style="margin:0 33px 0 20px"></wa-icon><wa-icon name="dot"></wa-icon></div>
<div><wa-icon name="dot" style="margin-right:28px"></wa-icon><wa-icon name="updown" style="margin:-8px 6px 0 0"></wa-icon><wa-icon name="wifi" style="margin:-1px 6px 0 0"></wa-icon><wa-icon name="signalx" style="margin:1px 7px 0 0"></wa-icon><wa-icon name="signal" style="margin:1px 8px 0 0"></wa-icon><wa-icon name="battery"></wa-icon></div>`);

define('chat-header',`<style>:host{display:flex;align-items:center;height:143px;box-sizing:border-box;background:#075e54;padding:0 51.500px 2px 20px;color:#fff;position:relative;z-index:1;box-shadow:0 2px 5px #0003}
h1{margin:0 auto 0 20.500px;font-size:46.300px;line-height:56px;font-weight:500;white-space:nowrap}</style>
<wa-icon name="back"></wa-icon><wa-icon name="twilio" style="margin-left:9px"></wa-icon><h1><slot></slot></h1>
<wa-icon name="video" style="margin-top:2px"></wa-icon><wa-icon name="phone" style="margin:2px 77px 0 73px"></wa-icon><wa-icon name="more" style="margin-top:2px"></wa-icon>`);

define('date-chip',`<style>:host{display:block;width:123.500px;height:65px;line-height:69px;border-radius:15px;background:#d5eaf5;color:#59656b;text-align:center;font-size:28px;box-shadow:0 1.500px 2px #0003}</style><slot></slot>`);

define('security-notice',`<style>:host{display:block;box-sizing:border-box;width:966px;height:131px;padding:18px 24px 0;border-radius:16px;background:#fff3c5;color:#69644e;text-align:center;font-size:27.900px;line-height:33px;box-shadow:0 1.500px 2px #0003;white-space:nowrap}
wa-icon{display:inline-block;vertical-align:-1px;margin-right:13px}</style><wa-icon name="lock"></wa-icon><slot></slot>`);

define('message-input',`<style>:host{display:flex;align-items:center;box-sizing:border-box;width:923.500px;height:115px;padding:0 32px 0 27px;border-radius:58px;background:#fff;box-shadow:0 2px 2px #0003;margin-top:2px}
.t{display:flex;align-items:center;margin:0 auto 0 27px}
.c{width:5px;height:53px;background:#00897b;margin-right:-5px}
.p{position:relative;font-size:39px;line-height:46px;padding-top:1px;color:#ccc;white-space:nowrap}</style>
<wa-icon name="smile" style="margin-top:2px"></wa-icon><div class="t"><div class="c"></div><div class="p"><slot></slot></div></div>
<wa-icon name="clip"></wa-icon><wa-icon name="camera" style="margin-left:59px"></wa-icon>`);

define('voice-button',`<style>:host{display:flex;align-items:center;justify-content:center;width:120px;height:120px;border-radius:50%;background:#00897b;box-shadow:0 5px 6px #0004}</style><wa-icon name="mic" style="margin-left:1px"></wa-icon>`);

define('chat-area',`<style>:host{display:grid;height:1922px;grid-template:1922px / 1080px}
chat-wallpaper,.body{grid-area:1/1}
.body{z-index:0;display:flex;flex-direction:column;align-items:center;padding:13px 0 11px;box-sizing:border-box}
security-notice{margin-top:37px}
.compose{margin:auto 11px 0 13px;align-self:stretch;display:flex;justify-content:space-between}</style>
<chat-wallpaper></chat-wallpaper><div class="body"><date-chip>TODAY</date-chip>
<security-notice>Messages to this chat and calls are now secured with end-to-end<br>encryption. Techinnover Bot may use another company to store, read and<br>respond to your messages and calls. Tap for more info.</security-notice>
<div class="compose"><message-input>Type a message</message-input><voice-button></voice-button></div></div>`);

define('nav-bar',`<style>:host{display:flex;align-items:center;justify-content:space-between;height:122px;box-sizing:border-box;padding:0 220px;background:#000}</style><wa-icon name="navback"></wa-icon><wa-icon name="navhome" style="margin-left:3px"></wa-icon><wa-icon name="navapps"></wa-icon>`);

define('phone-window',`<style>:host{display:flex;flex-direction:column;width:1080px;height:2312px;margin-top:100px;border-radius:7px;overflow:hidden}</style>
<window-bar></window-bar><status-bar></status-bar><chat-header>Techinnover Bot</chat-header><chat-area></chat-area><nav-bar></nav-bar>`);
</script>
</body>
</html>
